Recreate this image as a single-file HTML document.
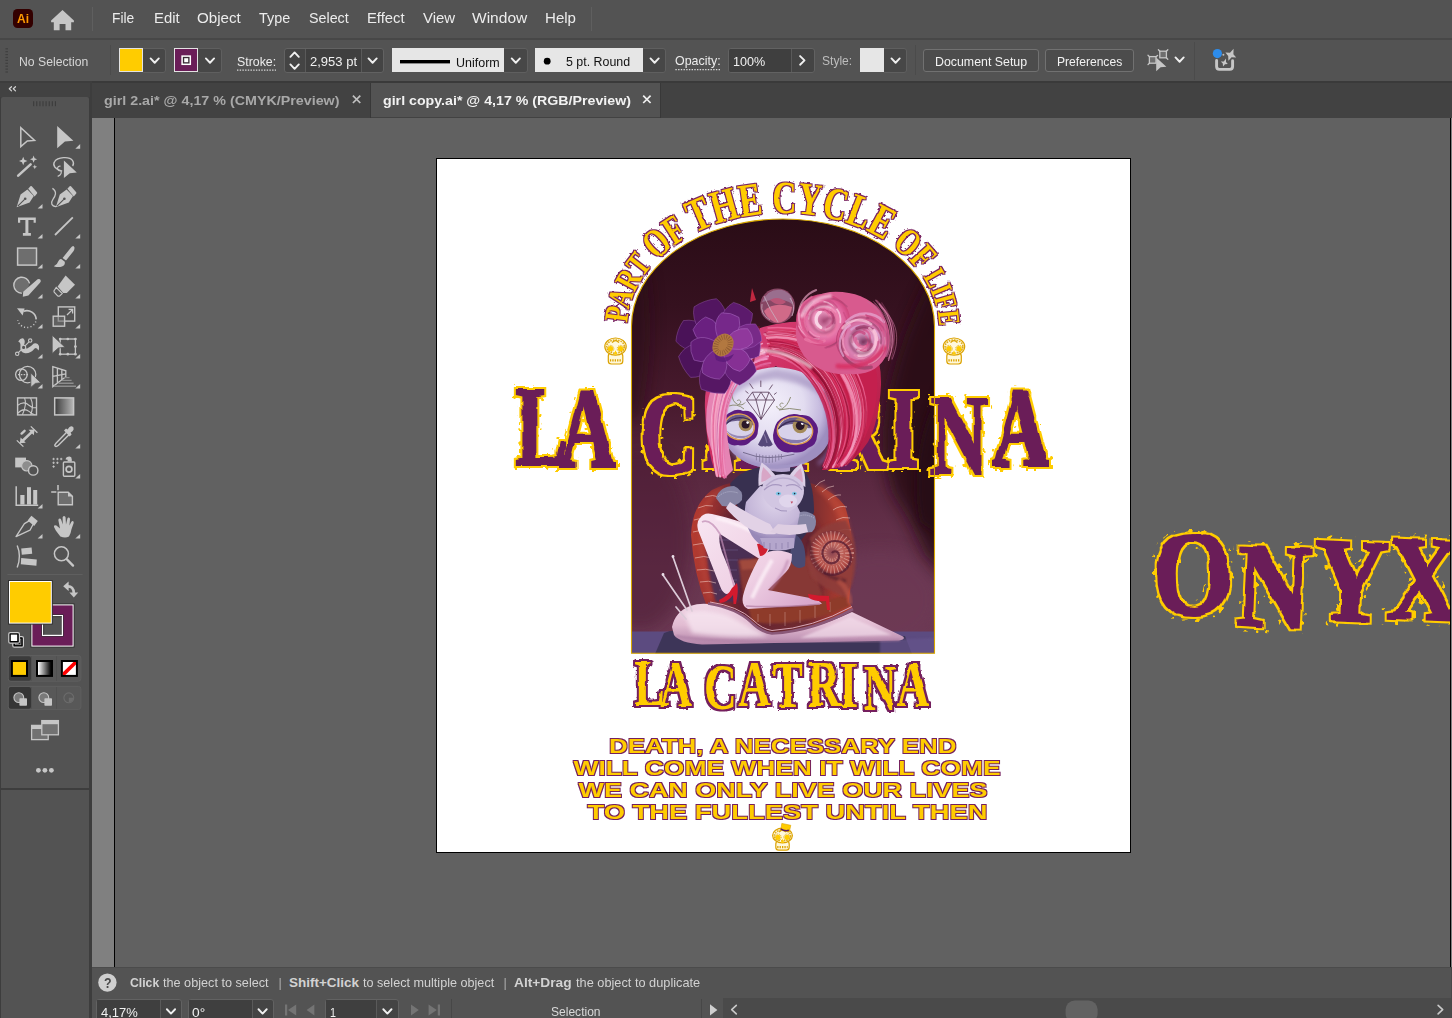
<!DOCTYPE html>
<html lang="en">
<head>
<meta charset="utf-8">
<title>Adobe Illustrator - girl copy.ai</title>
<style>
*{box-sizing:border-box;margin:0;padding:0}
html,body{width:1452px;height:1018px;overflow:hidden;background:#535353}
body{position:relative;font-family:"Liberation Sans",sans-serif;font-size:14px;color:#e4e4e4}
.t{position:absolute;white-space:nowrap;line-height:1;transform-origin:0 0;display:block}
.b{position:absolute;display:block}
svg{position:absolute;display:block;overflow:visible}
#menubar{position:absolute;left:0;top:0;width:1452px;height:38px;background:#535353}
#ctrl{position:absolute;left:0;top:38px;width:1452px;height:43px;background:#535353;border-top:2px solid #474747}
#tabs{position:absolute;left:92px;top:81px;width:1360px;height:37px;background:#424242;border-top:2px solid #3a3a3a}
#tools{position:absolute;left:0;top:81px;width:92px;height:937px;background:#3d3d3d}
#canvas{position:absolute;left:92px;top:118px;width:1360px;height:849px;background:#808080;overflow:hidden}
#pasteboard{position:absolute;left:22px;top:-2px;width:1337px;height:860px;background:#616161;border:1px solid #000}
#artboard{position:absolute;left:436px;top:158px;width:695px;height:695px;background:#fff;border:1px solid #000}
#status{position:absolute;left:92px;top:967px;width:1360px;height:51px;background:#535353;border-top:1px solid #4b4b4b}
#status2{position:absolute;left:723px;top:998px;width:729px;height:20px;background:#4a4a4a}
.fld{position:absolute;background:#444;border:1px solid #626262;border-radius:3px}
.dd{position:absolute;background:#474747;border:1px solid #5f5f5f;border-radius:0 3px 3px 0}
.lt{position:absolute;background:#e6e6e6}
.btn{position:absolute;background:#4c4c4c;border:1px solid #717171;border-radius:3px}
.sep{position:absolute;width:1px;background:#5d5d5d}

</style>
</head>
<body>
<div id="menubar"></div>
<div id="ctrl"></div>
<div class="b" style="left:13.20px;top:9.20px;width:20.00px;height:19.20px;background:#330000;border-radius:4.5px"></div>
<div class="sep" style="left:91.50px;top:6.50px;width:1.00px;height:24.50px;background:#5f5f5f"></div>
<div class="sep" style="left:590.50px;top:6.50px;width:1.00px;height:24.50px;background:#5f5f5f"></div>
<div class="sep" style="left:110.00px;top:45.00px;width:1.00px;height:30.00px;background:#4b4b4b"></div>
<div class="dd" style="left:141.00px;top:47.60px;width:25.00px;height:25.00px;border-radius:3px"></div>
<div class="b" style="left:119.10px;top:48.20px;width:23.70px;height:23.60px;background:#ffcc00;border:1.4px solid #e2e2e2"></div>
<div class="dd" style="left:196.00px;top:47.60px;width:25.50px;height:25.00px;border-radius:3px"></div>
<div class="b" style="left:174.20px;top:48.20px;width:23.80px;height:23.60px;background:#6a1d58;border:1.4px solid #e2e2e2"></div>
<div class="fld" style="left:283.60px;top:47.80px;width:100.60px;height:25.00px;"></div>
<div class="sep" style="left:305.20px;top:48.80px;width:1.00px;height:23.00px;background:#5a5a5a"></div>
<div class="sep" style="left:361.20px;top:48.80px;width:1.00px;height:23.00px;background:#5a5a5a"></div>
<div class="b" style="left:306.20px;top:48.80px;width:55.00px;height:23.00px;background:#3f3f3f"></div>
<div class="dd" style="left:502.00px;top:47.60px;width:26.00px;height:25.00px;border-radius:3px"></div>
<div class="lt" style="left:392.10px;top:48.00px;width:111.70px;height:24.20px;"></div>
<div class="dd" style="left:641.00px;top:47.60px;width:25.00px;height:25.00px;border-radius:3px"></div>
<div class="lt" style="left:535.10px;top:48.00px;width:107.60px;height:24.20px;"></div>
<div class="fld" style="left:728.20px;top:47.80px;width:86.80px;height:25.00px;"></div>
<div class="b" style="left:729.20px;top:48.80px;width:61.80px;height:23.00px;background:#3f3f3f;border-radius:2px 0 0 2px"></div>
<div class="sep" style="left:791.00px;top:48.80px;width:1.00px;height:23.00px;background:#5a5a5a"></div>
<div class="dd" style="left:882.00px;top:47.60px;width:25.40px;height:25.00px;border-radius:3px"></div>
<div class="lt" style="left:859.80px;top:48.00px;width:24.40px;height:24.20px;"></div>
<div class="sep" style="left:915.00px;top:45.00px;width:1.00px;height:30.00px;background:#4b4b4b"></div>
<div class="btn" style="left:923.20px;top:48.80px;width:115.60px;height:22.80px;"></div>
<div class="btn" style="left:1045.20px;top:48.80px;width:88.60px;height:22.80px;"></div>
<div class="sep" style="left:1193.60px;top:42.00px;width:1.00px;height:38.00px;background:#4b4b4b"></div>
<div id="tools"></div>
<div class="b" style="left:0.00px;top:83.00px;width:90.00px;height:14.00px;background:#424242"></div>
<div class="b" style="left:1.00px;top:97.00px;width:88.40px;height:691.00px;background:#535353;border-radius:2px 2px 0 0"></div>
<div class="b" style="left:1.00px;top:789.60px;width:88.40px;height:228.40px;background:#535353"></div>
<div id="tabs"></div>
<div class="b" style="left:371.00px;top:83.00px;width:289.00px;height:34.00px;background:#535353"></div>
<div class="sep" style="left:370.00px;top:83.00px;width:1.00px;height:35.00px;background:#383838"></div>
<div class="sep" style="left:660.00px;top:83.00px;width:1.00px;height:35.00px;background:#383838"></div>
<div id="status"></div>
<div id="status2"></div>
<div class="fld" style="left:96.20px;top:998.60px;width:86.20px;height:25.40px;"></div>
<div class="b" style="left:97.20px;top:999.60px;width:62.80px;height:18.40px;background:#3f3f3f"></div>
<div class="sep" style="left:160.00px;top:999.60px;width:1.00px;height:18.40px;background:#5a5a5a"></div>
<div class="fld" style="left:188.00px;top:998.60px;width:86.20px;height:25.40px;"></div>
<div class="b" style="left:189.00px;top:999.60px;width:62.60px;height:18.40px;background:#3f3f3f"></div>
<div class="sep" style="left:251.60px;top:999.60px;width:1.00px;height:18.40px;background:#5a5a5a"></div>
<div class="fld" style="left:325.00px;top:998.60px;width:73.80px;height:25.40px;"></div>
<div class="b" style="left:326.00px;top:999.60px;width:50.40px;height:18.40px;background:#3f3f3f"></div>
<div class="sep" style="left:376.40px;top:999.60px;width:1.00px;height:18.40px;background:#5a5a5a"></div>
<div class="sep" style="left:451.00px;top:999.00px;width:1.00px;height:19.00px;background:#474747"></div>
<div class="sep" style="left:700.60px;top:999.00px;width:1.00px;height:19.00px;background:#474747"></div>
<div class="b" style="left:1451.00px;top:967.00px;width:1.00px;height:51.00px;background:#484848"></div>
<svg width="1452" height="1018" viewBox="0 0 1452 1018" style="left:0;top:0">
<path d="M62.5 9.9L73.9 20.6V22.2H71.2V30.2H65.5V24H59.6V30.2H53.8V22.2H51.1V20.6Z" fill="#c6c6c6"/>
<rect x="5.4" y="48.2" width="2.6" height="1.2" fill="#404040"/>
<rect x="5.4" y="51.1" width="2.6" height="1.2" fill="#404040"/>
<rect x="5.4" y="54.0" width="2.6" height="1.2" fill="#404040"/>
<rect x="5.4" y="56.9" width="2.6" height="1.2" fill="#404040"/>
<rect x="5.4" y="59.8" width="2.6" height="1.2" fill="#404040"/>
<rect x="5.4" y="62.7" width="2.6" height="1.2" fill="#404040"/>
<rect x="5.4" y="65.6" width="2.6" height="1.2" fill="#404040"/>
<rect x="5.4" y="68.5" width="2.6" height="1.2" fill="#404040"/>
<rect x="5.4" y="71.4" width="2.6" height="1.2" fill="#404040"/>
<path d="M150.60 58.45L154.70 62.75L158.80 58.45" fill="none" stroke="#f0f0f0" stroke-width="1.90" stroke-linecap="round" stroke-linejoin="round"/>
<rect x="182.1" y="56.1" width="8.2" height="8.2" fill="#3a2a36" stroke="#fff" stroke-width="1.5"/>
<rect x="184.2" y="58.2" width="4" height="4" fill="#fff"/>
<path d="M205.90 58.45L210.00 62.75L214.10 58.45" fill="none" stroke="#f0f0f0" stroke-width="1.90" stroke-linecap="round" stroke-linejoin="round"/>
<path d="M237 70.2H276" stroke="#d9d9d9" stroke-width="1.2" stroke-dasharray="1.4 1.3"/>
<path d="M290.40 64.40L294.60 68.80L298.80 64.40" fill="none" stroke="#f0f0f0" stroke-width="1.90" stroke-linecap="round" stroke-linejoin="round"/>
<path d="M290.40 56.80L294.60 52.40L298.80 56.80" fill="none" stroke="#f0f0f0" stroke-width="1.90" stroke-linecap="round" stroke-linejoin="round"/>
<path d="M368.50 58.45L372.60 62.75L376.70 58.45" fill="none" stroke="#f0f0f0" stroke-width="1.90" stroke-linecap="round" stroke-linejoin="round"/>
<rect x="400" y="60" width="50" height="3.4" fill="#000"/>
<path d="M511.70 58.45L515.80 62.75L519.90 58.45" fill="none" stroke="#f0f0f0" stroke-width="1.90" stroke-linecap="round" stroke-linejoin="round"/>
<circle cx="547.2" cy="61.2" r="3.4" fill="#000"/>
<path d="M650.50 58.45L654.60 62.75L658.70 58.45" fill="none" stroke="#f0f0f0" stroke-width="1.90" stroke-linecap="round" stroke-linejoin="round"/>
<path d="M675.4 69.6H721" stroke="#d9d9d9" stroke-width="1.2" stroke-dasharray="1.4 1.3"/>
<path d="M800.10 56.10L804.50 60.40L800.10 64.70" fill="none" stroke="#f0f0f0" stroke-width="1.90" stroke-linecap="round" stroke-linejoin="round"/>
<path d="M891.50 58.45L895.60 62.75L899.70 58.45" fill="none" stroke="#f0f0f0" stroke-width="1.90" stroke-linecap="round" stroke-linejoin="round"/>
<g fill="none" stroke="#c6c6c6" stroke-width="1.3"><rect x="1149.4" y="56.6" width="6.6" height="6.6" fill="#6e6e6e"/><rect x="1159.8" y="51.2" width="6.6" height="6.6" fill="#6e6e6e"/><path d="M1148 55.2l1.4 1.4M1148 64.6l1.4 -1.4M1158.4 49.8l1.4 1.4M1167.8 49.8l-1.4 1.4M1167.8 59.2l-1.4 -1.4M1157.6 55.4l-1.4 1.2" stroke-linecap="round"/></g>
<path d="M1156.2 57.4L1166.4 66.8L1160.6 67.2L1156.2 71.2Z" fill="#c6c6c6"/>
<path d="M1175.50 57.45L1179.60 61.75L1183.70 57.45" fill="none" stroke="#f0f0f0" stroke-width="1.90" stroke-linecap="round" stroke-linejoin="round"/>
<path d="M1216.6 60.4V66.6Q1216.6 69.4 1219.4 69.4H1229.8Q1232.6 69.4 1232.6 66.6V60.8" fill="none" stroke="#c6c6c6" stroke-width="2.9" stroke-linecap="round"/>
<path d="M1233.6 48.8L1233.4 54.2L1236.2 57.6L1231.6 57.2L1228.4 60.8L1228.2 56L1225.4 52.6L1230 52.8Z" fill="#c6c6c6"/>
<path d="M1226 58.6L1226 62L1227.8 64L1225 64.2L1223 66.6L1222.8 63.6L1220.8 61.6L1223.8 61.4Z" fill="#c6c6c6"/>
<circle cx="1223.4" cy="54.8" r="1" fill="#bdbdbd"/>
<circle cx="1217.4" cy="53.6" r="4.6" fill="#2d8ceb"/>
<path d="M11.50 86.70L9.30 88.80L11.50 90.90" fill="none" stroke="#d4d4d4" stroke-width="1.20" stroke-linecap="round" stroke-linejoin="round"/>
<path d="M15.50 86.70L13.30 88.80L15.50 90.90" fill="none" stroke="#d4d4d4" stroke-width="1.20" stroke-linecap="round" stroke-linejoin="round"/>
<rect x="33.20" y="101.2" width="1" height="5" fill="#3a3a3a"/>
<rect x="36.30" y="101.2" width="1" height="5" fill="#3a3a3a"/>
<rect x="39.40" y="101.2" width="1" height="5" fill="#3a3a3a"/>
<rect x="42.50" y="101.2" width="1" height="5" fill="#3a3a3a"/>
<rect x="45.60" y="101.2" width="1" height="5" fill="#3a3a3a"/>
<rect x="48.70" y="101.2" width="1" height="5" fill="#3a3a3a"/>
<rect x="51.80" y="101.2" width="1" height="5" fill="#3a3a3a"/>
<rect x="54.90" y="101.2" width="1" height="5" fill="#3a3a3a"/>
<path d="M352.9 95.6l7.4 7.4M360.3 95.6l-7.4 7.4" stroke="#c0c0c0" stroke-width="1.7" fill="none"/>
<path d="M643.2 95.6l7.4 7.4M650.6 95.6l-7.4 7.4" stroke="#f0f0f0" stroke-width="1.7" fill="none"/>
<circle cx="107.4" cy="982.6" r="9.2" fill="#cfcfcf"/>
<path d="M166.90 1009.25L171.00 1013.55L175.10 1009.25" fill="none" stroke="#f0f0f0" stroke-width="1.90" stroke-linecap="round" stroke-linejoin="round"/>
<path d="M258.50 1009.25L262.60 1013.55L266.70 1009.25" fill="none" stroke="#f0f0f0" stroke-width="1.90" stroke-linecap="round" stroke-linejoin="round"/>
<path d="M285 1004.6h2.2v11h-2.2zM296.2 1004.6v11L288 1010.1z" fill="#747474"/>
<path d="M314.4 1004.6v11L306.6 1010.1z" fill="#747474"/>
<path d="M383.30 1009.25L387.40 1013.55L391.50 1009.25" fill="none" stroke="#f0f0f0" stroke-width="1.90" stroke-linecap="round" stroke-linejoin="round"/>
<path d="M411 1004.6v11L418.8 1010.1z" fill="#747474"/>
<path d="M437.8 1004.6h2.2v11h-2.2zM428.6 1004.6v11L436.8 1010.1z" fill="#747474"/>
<path d="M710 1004.2v11.4L717.4 1009.9z" fill="#cfcfcf"/>
<path d="M736.30 1005.30L731.70 1009.60L736.30 1013.90" fill="none" stroke="#c9c9c9" stroke-width="1.60" stroke-linecap="round" stroke-linejoin="round"/>
<path d="M1438.10 1005.30L1442.70 1009.60L1438.10 1013.90" fill="none" stroke="#c9c9c9" stroke-width="1.60" stroke-linecap="round" stroke-linejoin="round"/>
<rect x="1065.6" y="1000.6" width="32" height="22" rx="9" fill="#626262"/>
</svg>
<span class="t" style="left:17.20px;top:12.23px;font-size:13.20px;color:#ff9a00;font-weight:bold;transform:scaleX(0.9091);">Ai</span>
<span class="t" style="left:112.40px;top:9.76px;font-size:15.40px;color:#ececec;transform:scaleX(0.8946);">File</span>
<span class="t" style="left:153.60px;top:9.76px;font-size:15.40px;color:#ececec;transform:scaleX(0.9647);">Edit</span>
<span class="t" style="left:197.20px;top:9.76px;font-size:15.40px;color:#ececec;transform:scaleX(0.9841);">Object</span>
<span class="t" style="left:259.40px;top:9.76px;font-size:15.40px;color:#ececec;transform:scaleX(0.9345);">Type</span>
<span class="t" style="left:309.30px;top:9.76px;font-size:15.40px;color:#ececec;transform:scaleX(0.9275);">Select</span>
<span class="t" style="left:367.40px;top:9.76px;font-size:15.40px;color:#ececec;transform:scaleX(0.9618);">Effect</span>
<span class="t" style="left:422.80px;top:9.76px;font-size:15.40px;color:#ececec;transform:scaleX(0.9728);">View</span>
<span class="t" style="left:472.30px;top:9.76px;font-size:15.40px;color:#ececec;transform:scaleX(1.0096);">Window</span>
<span class="t" style="left:544.60px;top:9.76px;font-size:15.40px;color:#ececec;transform:scaleX(0.9788);">Help</span>
<span class="t" style="left:19.00px;top:54.86px;font-size:13.40px;color:#d6d6d6;transform:scaleX(0.9121);">No Selection</span>
<span class="t" style="left:236.80px;top:54.89px;font-size:13.60px;color:#ececec;transform:scaleX(0.9098);">Stroke:</span>
<span class="t" style="left:310.30px;top:54.89px;font-size:13.60px;color:#f0f0f0;transform:scaleX(0.9582);">2,953 pt</span>
<span class="t" style="left:455.60px;top:55.89px;font-size:13.60px;color:#111;transform:scaleX(0.9179);">Uniform</span>
<span class="t" style="left:565.70px;top:54.89px;font-size:13.60px;color:#111;transform:scaleX(0.9130);">5 pt. Round</span>
<span class="t" style="left:675.20px;top:54.29px;font-size:13.60px;color:#ececec;transform:scaleX(0.9141);">Opacity:</span>
<span class="t" style="left:733.20px;top:54.89px;font-size:13.60px;color:#f0f0f0;transform:scaleX(0.9257);">100%</span>
<span class="t" style="left:821.60px;top:54.09px;font-size:13.60px;color:#bdbdbd;transform:scaleX(0.8879);">Style:</span>
<span class="t" style="left:935.30px;top:54.89px;font-size:13.60px;color:#f2f2f2;transform:scaleX(0.9092);">Document Setup</span>
<span class="t" style="left:1057.20px;top:54.89px;font-size:13.60px;color:#f2f2f2;transform:scaleX(0.8892);">Preferences</span>
<span class="t" style="left:104.00px;top:94.29px;font-size:13.60px;color:#a8a8a8;font-weight:bold;transform:scaleX(1.0511);">girl 2.ai* @ 4,17 % (CMYK/Preview)</span>
<span class="t" style="left:383.40px;top:94.29px;font-size:13.60px;color:#f2f2f2;font-weight:bold;transform:scaleX(1.0443);">girl copy.ai* @ 4,17 % (RGB/Preview)</span>
<span class="t" style="left:103.60px;top:975.75px;font-size:14.00px;color:#4a4a4a;font-weight:bold;transform:scaleX(0.8887);">?</span>
<span class="t" style="left:130.20px;top:975.77px;font-size:13.50px;color:#d2d2d2;font-weight:bold;transform:scaleX(0.9050);">Click</span>
<span class="t" style="left:163.40px;top:975.77px;font-size:13.50px;color:#d2d2d2;transform:scaleX(0.9381);">the object to select</span>
<span class="t" style="left:278.60px;top:975.77px;font-size:13.50px;color:#d2d2d2;transform:scaleX(0.6273);">|</span>
<span class="t" style="left:288.90px;top:975.77px;font-size:13.50px;color:#d2d2d2;font-weight:bold;">Shift+Click</span>
<span class="t" style="left:363.20px;top:975.77px;font-size:13.50px;color:#d2d2d2;transform:scaleX(0.9350);">to select multiple object</span>
<span class="t" style="left:503.80px;top:975.77px;font-size:13.50px;color:#d2d2d2;transform:scaleX(0.6273);">|</span>
<span class="t" style="left:514.20px;top:975.77px;font-size:13.50px;color:#d2d2d2;font-weight:bold;transform:scaleX(1.0170);">Alt+Drag</span>
<span class="t" style="left:576.00px;top:975.77px;font-size:13.50px;color:#d2d2d2;transform:scaleX(0.9456);">the object to duplicate</span>
<span class="t" style="left:100.60px;top:1006.09px;font-size:13.60px;color:#f0f0f0;transform:scaleX(0.9543);">4,17%</span>
<span class="t" style="left:192.40px;top:1006.09px;font-size:13.60px;color:#f0f0f0;transform:scaleX(1.0152);">0°</span>
<span class="t" style="left:330.40px;top:1006.09px;font-size:13.60px;color:#f0f0f0;transform:scaleX(0.7933);">1</span>
<span class="t" style="left:551.00px;top:1004.69px;font-size:13.60px;color:#d8d8d8;transform:scaleX(0.8865);">Selection</span>
<div id="canvas"><div id="pasteboard"></div></div>
<div id="artboard"></div>
<svg width="1452" height="1018" viewBox="0 0 1452 1018" style="left:0;top:0">
<defs>
<clipPath id="view"><rect x="115" y="118" width="1335" height="849"/></clipPath>
<clipPath id="arch"><path d="M631.5 653.2V326A151.5 107 0 0 1 934.5 326V653.2Z"/></clipPath>
<filter id="b05" x="-20%" y="-20%" width="140%" height="140%"><feGaussianBlur stdDeviation="0.5"/></filter>
<filter id="b1" x="-20%" y="-20%" width="140%" height="140%"><feGaussianBlur stdDeviation="1"/></filter>
<filter id="b2" x="-30%" y="-30%" width="160%" height="160%"><feGaussianBlur stdDeviation="2"/></filter>
<filter id="b4" x="-40%" y="-40%" width="180%" height="180%"><feGaussianBlur stdDeviation="4"/></filter>
<filter id="b8" x="-60%" y="-60%" width="220%" height="220%"><feGaussianBlur stdDeviation="8"/></filter>
<linearGradient id="bgG" x1="0" y1="219" x2="0" y2="653" gradientUnits="userSpaceOnUse">
<stop offset="0" stop-color="#2a0c16"/><stop offset="0.2" stop-color="#35111f"/><stop offset="0.42" stop-color="#481a2e"/>
<stop offset="0.6" stop-color="#5a2840"/><stop offset="0.8" stop-color="#68354f"/><stop offset="1" stop-color="#6c3a54"/></linearGradient>
<radialGradient id="faceG" cx="770" cy="405" r="62" gradientUnits="userSpaceOnUse">
<stop offset="0" stop-color="#f4f0fb"/><stop offset="0.55" stop-color="#e2dcf0"/><stop offset="0.85" stop-color="#c2b6dc"/><stop offset="1" stop-color="#9e8fc0"/></radialGradient>
<linearGradient id="hairG" x1="700" y1="300" x2="880" y2="470" gradientUnits="userSpaceOnUse">
<stop offset="0" stop-color="#d85088"/><stop offset="0.45" stop-color="#cf2f62"/><stop offset="1" stop-color="#b01a42"/></linearGradient>
<radialGradient id="curlG" cx="846" cy="330" r="42" gradientUnits="userSpaceOnUse">
<stop offset="0" stop-color="#b86a98"/><stop offset="0.3" stop-color="#f0a4cc"/><stop offset="0.7" stop-color="#ee6fa2"/><stop offset="1" stop-color="#d8407a"/></radialGradient>
<linearGradient id="legG" x1="700" y1="510" x2="800" y2="610" gradientUnits="userSpaceOnUse">
<stop offset="0" stop-color="#f8e6f2"/><stop offset="0.6" stop-color="#efd0e4"/><stop offset="1" stop-color="#d8a8cc"/></linearGradient>
<linearGradient id="bodyG" x1="0" y1="604" x2="0" y2="646" gradientUnits="userSpaceOnUse">
<stop offset="0" stop-color="#f0d6e6"/><stop offset="0.5" stop-color="#e2bcd2"/><stop offset="1" stop-color="#b080a6"/></linearGradient>
<linearGradient id="shellG" x1="690" y1="0" x2="855" y2="0" gradientUnits="userSpaceOnUse">
<stop offset="0" stop-color="#b83c30"/><stop offset="0.12" stop-color="#9c3230"/><stop offset="0.3" stop-color="#662432"/><stop offset="0.7" stop-color="#702a30"/><stop offset="0.9" stop-color="#a63a30"/><stop offset="1" stop-color="#bc4432"/></linearGradient>
<radialGradient id="spirG" cx="832" cy="553" r="23" gradientUnits="userSpaceOnUse">
<stop offset="0" stop-color="#8a4450"/><stop offset="0.4" stop-color="#c06860"/><stop offset="0.75" stop-color="#b04a44"/><stop offset="1" stop-color="#7a3038"/></radialGradient>
<radialGradient id="curlG1" cx="824" cy="321" r="28" gradientUnits="userSpaceOnUse">
<stop offset="0" stop-color="#a84a78"/><stop offset="0.35" stop-color="#ec98c0"/><stop offset="0.75" stop-color="#e0609a"/><stop offset="1" stop-color="#c83c70"/></radialGradient>
<radialGradient id="curlG2" cx="863" cy="342" r="27" gradientUnits="userSpaceOnUse">
<stop offset="0" stop-color="#7e3a64"/><stop offset="0.35" stop-color="#dc98c4"/><stop offset="0.75" stop-color="#d870a4"/><stop offset="1" stop-color="#b83c70"/></radialGradient>
<radialGradient id="catG" cx="775" cy="500" r="40" gradientUnits="userSpaceOnUse">
<stop offset="0" stop-color="#e0d6ec"/><stop offset="0.7" stop-color="#c4b6d8"/><stop offset="1" stop-color="#9888b8"/></radialGradient>
<filter id="fBig" filterUnits="userSpaceOnUse" x="500" y="372" width="570" height="116" color-interpolation-filters="sRGB"><feTurbulence type="fractalNoise" baseFrequency="0.060" numOctaves="2" seed="5" result="w"/><feDisplacementMap in="SourceAlpha" in2="w" scale="5.0" xChannelSelector="R" yChannelSelector="G" result="src"/><feMorphology in="src" operator="dilate" radius="1.00" result="fat"/><feMorphology in="src" operator="dilate" radius="3.00" result="out"/><feMorphology in="src" operator="dilate" radius="5.00" result="band"/><feTurbulence type="fractalNoise" baseFrequency="0.22" numOctaves="1" seed="4" result="n"/><feColorMatrix in="n" type="matrix" values="0 0 0 0 0  0 0 0 0 0  0 0 0 0 0  30.0 0 0 0 -18.90" result="dots"/><feComposite in="dots" in2="band" operator="in" result="th"/><feGaussianBlur in="out" stdDeviation="0.3" result="outs"/><feMerge result="edgeA"><feMergeNode in="th"/><feMergeNode in="outs"/></feMerge><feFlood flood-color="#ffcc00"/><feComposite in2="edgeA" operator="in" result="e"/><feGaussianBlur in="fat" stdDeviation="0.4" result="fats"/><feFlood flood-color="#6a1d58"/><feComposite in2="fats" operator="in" result="p"/><feMerge><feMergeNode in="e"/><feMergeNode in="p"/></feMerge></filter>
<filter id="fSmall" filterUnits="userSpaceOnUse" x="626" y="652" width="314" height="66" color-interpolation-filters="sRGB"><feTurbulence type="fractalNoise" baseFrequency="0.100" numOctaves="2" seed="10" result="w"/><feDisplacementMap in="SourceAlpha" in2="w" scale="3.0" xChannelSelector="R" yChannelSelector="G" result="src"/><feMorphology in="src" operator="dilate" radius="0.00" result="fat"/><feMorphology in="src" operator="dilate" radius="2.00" result="out"/><feMorphology in="src" operator="dilate" radius="3.00" result="band"/><feTurbulence type="fractalNoise" baseFrequency="0.36" numOctaves="1" seed="9" result="n"/><feColorMatrix in="n" type="matrix" values="0 0 0 0 0  0 0 0 0 0  0 0 0 0 0  30.0 0 0 0 -18.60" result="dots"/><feComposite in="dots" in2="band" operator="in" result="th"/><feGaussianBlur in="out" stdDeviation="0.3" result="outs"/><feMerge result="edgeA"><feMergeNode in="th"/><feMergeNode in="outs"/></feMerge><feFlood flood-color="#741f5e"/><feComposite in2="edgeA" operator="in" result="e"/><feGaussianBlur in="fat" stdDeviation="0.4" result="fats"/><feFlood flood-color="#ffcc00"/><feComposite in2="fats" operator="in" result="p"/><feMerge><feMergeNode in="e"/><feMergeNode in="p"/></feMerge></filter>
<filter id="fOnyx" filterUnits="userSpaceOnUse" x="1140" y="515" width="320" height="130" color-interpolation-filters="sRGB"><feTurbulence type="fractalNoise" baseFrequency="0.050" numOctaves="2" seed="13" result="w"/><feDisplacementMap in="SourceAlpha" in2="w" scale="6.0" xChannelSelector="R" yChannelSelector="G" result="src"/><feMorphology in="src" operator="dilate" radius="1.00" result="fat"/><feMorphology in="src" operator="dilate" radius="3.00" result="out"/><feMorphology in="src" operator="dilate" radius="6.00" result="band"/><feTurbulence type="fractalNoise" baseFrequency="0.17" numOctaves="1" seed="12" result="n"/><feColorMatrix in="n" type="matrix" values="0 0 0 0 0  0 0 0 0 0  0 0 0 0 0  30.0 0 0 0 -18.90" result="dots"/><feComposite in="dots" in2="band" operator="in" result="th"/><feGaussianBlur in="out" stdDeviation="0.3" result="outs"/><feMerge result="edgeA"><feMergeNode in="th"/><feMergeNode in="outs"/></feMerge><feFlood flood-color="#ffcc00"/><feComposite in2="edgeA" operator="in" result="e"/><feGaussianBlur in="fat" stdDeviation="0.4" result="fats"/><feFlood flood-color="#6a1d58"/><feComposite in2="fats" operator="in" result="p"/><feMerge><feMergeNode in="e"/><feMergeNode in="p"/></feMerge></filter>
<filter id="fArc" filterUnits="userSpaceOnUse" x="596" y="168" width="376" height="170" color-interpolation-filters="sRGB"><feTurbulence type="fractalNoise" baseFrequency="0.120" numOctaves="2" seed="22" result="w"/><feDisplacementMap in="SourceAlpha" in2="w" scale="2.0" xChannelSelector="R" yChannelSelector="G" result="src"/><feMorphology in="src" operator="dilate" radius="0.00" result="fat"/><feMorphology in="src" operator="dilate" radius="1.00" result="out"/><feMorphology in="src" operator="dilate" radius="2.00" result="band"/><feTurbulence type="fractalNoise" baseFrequency="0.45" numOctaves="1" seed="21" result="n"/><feColorMatrix in="n" type="matrix" values="0 0 0 0 0  0 0 0 0 0  0 0 0 0 0  30.0 0 0 0 -18.60" result="dots"/><feComposite in="dots" in2="band" operator="in" result="th"/><feGaussianBlur in="out" stdDeviation="0.3" result="outs"/><feMerge result="edgeA"><feMergeNode in="th"/><feMergeNode in="outs"/></feMerge><feFlood flood-color="#7a2562"/><feComposite in2="edgeA" operator="in" result="e"/><feGaussianBlur in="fat" stdDeviation="0.4" result="fats"/><feFlood flood-color="#ffcc00"/><feComposite in2="fats" operator="in" result="p"/><feMerge><feMergeNode in="e"/><feMergeNode in="p"/></feMerge></filter>
<filter id="fQuote" filterUnits="userSpaceOnUse" x="560" y="730" width="452" height="98" color-interpolation-filters="sRGB"><feTurbulence type="fractalNoise" baseFrequency="0.100" numOctaves="2" seed="3" result="w"/><feDisplacementMap in="SourceAlpha" in2="w" scale="0.0" xChannelSelector="R" yChannelSelector="G" result="src"/><feMorphology in="src" operator="dilate" radius="0.00" result="fat"/><feMorphology in="src" operator="dilate" radius="1.00" result="out"/><feMorphology in="src" operator="dilate" radius="1.00" result="band"/><feTurbulence type="fractalNoise" baseFrequency="0.70" numOctaves="1" seed="2" result="n"/><feColorMatrix in="n" type="matrix" values="0 0 0 0 0  0 0 0 0 0  0 0 0 0 0  30.0 0 0 0 -27.00" result="dots"/><feComposite in="dots" in2="band" operator="in" result="th"/><feGaussianBlur in="out" stdDeviation="0.3" result="outs"/><feMerge result="edgeA"><feMergeNode in="th"/><feMergeNode in="outs"/></feMerge><feFlood flood-color="#741f5e"/><feComposite in2="edgeA" operator="in" result="e"/><feGaussianBlur in="fat" stdDeviation="0.4" result="fats"/><feFlood flood-color="#ffcc00"/><feComposite in2="fats" operator="in" result="p"/><feMerge><feMergeNode in="e"/><feMergeNode in="p"/></feMerge></filter>
<path id="arcp" d="M627 328A156 115 0 0 1 939 328" fill="none"/>
</defs>
<g clip-path="url(#view)">
<g clip-path="url(#arch)">
<rect x="631" y="218" width="304" height="436" fill="url(#bgG)"/>
<ellipse cx="640" cy="540" rx="50" ry="90" fill="#4e1f36" opacity="0.55" filter="url(#b8)"/>
<ellipse cx="880" cy="600" rx="60" ry="50" fill="#6e3a56" opacity="0.6" filter="url(#b8)"/>
<path d="M940 260L960 260L960 590L926 556L908 518L892 492L882 450Q884 360 940 260Z" fill="#2b0d18" opacity="0.9" filter="url(#b8)"/>
<path d="M944 380L960 380L960 550L920 522Q906 450 944 380Z" fill="#260a14" opacity="0.8" filter="url(#b4)"/>
<path d="M620 240L640 240Q660 330 640 420L620 420Z" fill="#2b0d18" opacity="0.6" filter="url(#b8)"/>
<rect x="631" y="631.5" width="304" height="22" fill="#5c4b80"/>
<path d="M631 631.5H935" stroke="#4a3760" stroke-width="1.5" filter="url(#b05)"/>
<path d="M664 633L670 631L905 636L912 654L655 654Z" fill="#3d3558" filter="url(#b05)"/>
<path d="M880 640L935 638V654H880Z" fill="#66558c" opacity="0.7" filter="url(#b1)"/>
</g>
<g filter="url(#fBig)"><text transform="scale(0.7800 1.1500)" x="660.9 717.1 769.3 821.6 902.4 982.0 1063.5 1138.9 1193.4 1272.2" y="404.1 406.0 406.0 410.4 406.9 408.4 407.1 406.2 412.3 405.6" font-family="'Liberation Serif',serif" font-weight="bold" font-size="100" fill="#6a1d58">LA CATRINA</text></g>
<g clip-path="url(#arch)">
<path d="M706 604Q694 575 691 535Q692 505 712 490Q740 476 780 478Q825 480 845 506Q856 540 851 580L849 602L853 609Q815 630 772 634Q760 632 750 622Q735 608 706 604Z" fill="url(#shellG)"/>
<path d="M711 600Q699 560 701 520Q705 500 722 489" fill="none" stroke="#cc5240" stroke-width="5" opacity="0.4" filter="url(#b2)"/>
<path d="M818 486Q846 505 848 545" fill="none" stroke="#d05440" stroke-width="8" opacity="0.45" filter="url(#b2)"/>
<path d="M716 520Q740 500 790 500Q820 520 826 560L820 600L740 600Z" fill="#5e2230" opacity="0.75" filter="url(#b4)"/>
<path d="M724 522Q744 536 756 556L742 566L738 602L716 602Q704 560 708 534Z" fill="#46305a" opacity="0.85" filter="url(#b1)"/><path d="M714 540h22M714 550h24M716 560h22M717 570h20M718 580h19M719 590h18" stroke="#7a6aa0" stroke-width="0.7" opacity="0.6" fill="none"/><path d="M738 560L812 556L822 596L745 606Z" fill="#873834" filter="url(#b1)"/>
<path d="M740 560L790 557L786 566L742 570Z" fill="#a85040" opacity="0.8" filter="url(#b1)"/>
<path d="M752 622Q800 628 850 606L846 594Q800 612 748 606Z" fill="#8e3a2c" filter="url(#b1)"/>
<g stroke="#f2cfc8" stroke-width="0.8" fill="none" opacity="0.7">
<path d="M694 520q8 -3 14 -1M693 532q9 -3 16 -1M693 545q9 -3 17 0M695 558q9 -3 17 0M697 570q9 -2 17 1M700 582q9 -2 16 1M703 593q8 -2 14 1M698 508q8 -4 15 -2M705 497q8 -3 14 0"/>
<path d="M822 492q6 -6 12 -6M828 500q7 -6 13 -5M833 510q7 -5 14 -3M836 520q7 -4 14 -2M838 531q7 -3 13 -1M815 487q5 -6 10 -7"/>
<path d="M770 614v12M785 612v14M800 610v13M815 606v12M830 602v10M758 614v8" opacity="0.6"/>
</g>
<path d="M846 520Q862 548 852 584L846 598Q826 590 812 578Q804 560 810 538Q824 522 846 520Z" fill="#8e3c3a" opacity="0.9" filter="url(#b1)"/><circle cx="832" cy="553" r="22.5" fill="url(#spirG)"/>
<circle cx="832" cy="553" r="17.5" fill="none" stroke="#f0c4bc" stroke-width="9" stroke-dasharray="0.9 2.6" opacity="0.55"/>
<circle cx="832" cy="553" r="8.5" fill="none" stroke="#f0c4bc" stroke-width="6" stroke-dasharray="0.8 2.2" opacity="0.5"/>
<path d="M832 553c2 -3 7 -2 7 3c0 7 -9 10 -14 4c-6 -8 0 -19 10 -19c13 0 19 13 14 24c-5 9 -16 12 -25 8" fill="none" stroke="#5e2234" stroke-width="2.2" opacity="0.85" filter="url(#b05)"/>
<path d="M809 540Q811 576 846 581" fill="none" stroke="#4e1c2c" stroke-width="3.5" opacity="0.6" filter="url(#b1)"/>
<path d="M838 580Q850 590 850 604" fill="none" stroke="#c45a48" stroke-width="5" opacity="0.5" filter="url(#b1)"/>
<path d="M672 627Q675 612 690 606Q702 602 714 605Q736 609 750 622Q760 632 772 634Q812 631 852 612L903 636.5Q906 639.5 899 640.5L702 644.5Q680 643 674 635Z" fill="url(#bodyG)"/>
<path d="M684 613Q700 607 728 615Q750 627 768 636Q730 639 692 633Z" fill="#f8e8f2" opacity="0.75" filter="url(#b2)"/>
<path d="M850 617L892 635L800 638Z" fill="#f2dcea" opacity="0.7" filter="url(#b1)"/>
<path d="M676 636Q720 645 900 640" fill="none" stroke="#a87aa0" stroke-width="2" opacity="0.7" filter="url(#b1)"/>
<path d="M708 603.5Q736 608 751 622Q761 632 772 633.5Q814 631 853 609" fill="none" stroke="#8a5878" stroke-width="2.6"/>
<path d="M710 602Q738 606 753 620Q762 629 772 630.5Q813 628 852 606.5" fill="none" stroke="#d8a8b8" stroke-width="1"/>
<path d="M673 557L692 611M663 575L687 610M676 607L686 619" fill="none" stroke="#dccbd8" stroke-width="1.7" stroke-linecap="round"/>
<circle cx="673" cy="556.5" r="1.4" fill="#e8dce6"/><circle cx="663" cy="574.5" r="1.4" fill="#e8dce6"/>
<path d="M730 484Q742 468 768 466L802 468Q814 480 814 512L806 534L786 560L770 556L742 520Z" fill="#383050"/>
<path d="M792 532Q808 540 805 566Q796 572 790 560Z" fill="#4a4a72"/>
<path d="M768 462h22v10h-22z" fill="#b0a0cc"/>
<path d="M764 468Q780 476 802 468L800 476Q780 482 766 476Z" fill="#2e2640"/>
<path d="M700 518Q704 512 712 514Q740 520 760 530L770 548Q764 560 758 558L720 534Q718 540 722 552L735 584Q734 594 726 594Q722 592 720 586L698 530Q696 522 700 518Z" fill="url(#legG)"/>
<path d="M760 556Q775 546 792 554Q792 566 786 572L768 590L810 598Q820 600 822 604L748 609Q741 606 743 596Q746 582 760 556Z" fill="url(#legG)"/>
<path d="M702 522Q710 518 720 534L734 586" fill="none" stroke="#c08cb4" stroke-width="1.8" opacity="0.7" filter="url(#b05)"/>
<path d="M716 518Q740 524 760 536" fill="none" stroke="#fff6fb" stroke-width="3" opacity="0.8" filter="url(#b1)"/>
<path d="M772 560Q760 580 752 598" fill="none" stroke="#fff6fb" stroke-width="4" opacity="0.7" filter="url(#b1)"/>
<path d="M788 560Q784 574 770 590" fill="none" stroke="#b880aa" stroke-width="2.4" opacity="0.7" filter="url(#b1)"/>
<path d="M746 606Q780 608 820 604" fill="none" stroke="#b884aa" stroke-width="1.6" opacity="0.8" filter="url(#b05)"/>
<path d="M757 544Q764 542 768 548Q766 556 760 556Z" fill="#d02030"/>
<path d="M719 600Q728 596 732 588L737 583Q739 590 736 604L733.5 604L733 595Q728 602 720 603Z" fill="#d31a2e"/>
<path d="M808 594Q818 596 829 596L830 610L827 610L826 601Q816 602 809 598Z" fill="#d31a2e"/>
<path d="M705 410Q703 372 727 346Q750 326 790 322L850 320Q882 340 881 385Q879 422 868 442Q856 460 844 466L822 470Q834 450 832 420L776 366L722 400L714 440L724 478L716 476Q706 446 705 410Z" fill="url(#hairG)"/>
<path d="M721 420Q720 371 776 367Q833 371 833 420Q833 448 812 460Q796 468.5 777 468.5Q756 468.5 742 460Q721 448 721 420Z" fill="url(#faceG)"/>
<path d="M723 408Q730 377 776 369Q822 375 831 408Q818 385 776 379Q736 383 723 408Z" fill="#9a86b8" opacity="0.55" filter="url(#b2)"/>
<path d="M824 396Q834 420 831 446Q828 458 818 464" fill="none" stroke="#8a6aa8" stroke-width="5" opacity="0.6" filter="url(#b2)"/>
<path d="M724 412Q722 440 740 458" fill="none" stroke="#a890c4" stroke-width="4" opacity="0.6" filter="url(#b2)"/>
<path d="M742 460Q756 468.5 777 468.5Q796 468.5 812 460Q796 465 777 465Q758 465 742 460Z" fill="#a396c6" opacity="0.8"/>
<g>
<path d="M723 422q2 -8 8 -10q6 -4 12 -1q8 -1 12 5q5 6 3 14q0 8 -7 11q-5 6 -13 4q-8 2 -12 -5q-6 -7 -3 -18z" fill="#5c1c80"/>
<ellipse cx="739.4" cy="426.8" rx="14.6" ry="12.4" transform="rotate(8 739.4 426.8)" fill="#d8d2ea"/>
<path d="M725 424q4 -10 16 -10q10 1 14 10q-2 2 -4 1q-12 -8 -26 -1z" fill="#6a5c8c"/>
<path d="M726 430q6 10 18 8q8 -2 10 -8q-4 6 -12 6q-10 0 -16 -6z" fill="#9688b8"/>
<circle cx="745.6" cy="424.4" r="6.9" fill="#a48a5a"/><circle cx="745.6" cy="424.4" r="4" fill="#2a1828"/><circle cx="747.6" cy="422.6" r="1.3" fill="#fff"/>
<path d="M725 425q12 -13 29 -3" fill="none" stroke="#3e2e58" stroke-width="1.4"/>
<ellipse cx="739.4" cy="426.8" rx="15" ry="12.8" transform="rotate(8 739.4 426.8)" fill="none" stroke="#e0a050" stroke-width="1.4"/>
<path d="M774 430q2 -10 10 -13q8 -5 16 -2q10 -1 14 6q6 6 3 15q0 9 -9 12q-6 6 -16 4q-10 2 -15 -5q-6 -7 -3 -17z" fill="#5c1c80"/>
<ellipse cx="795" cy="430.6" rx="17.4" ry="13.6" transform="rotate(6 795 430.6)" fill="#d8d2ea"/>
<path d="M778 428q6 -12 20 -11q10 1 14 10q-2 2 -4 1q-14 -8 -30 0z" fill="#6a5c8c"/>
<path d="M779 436q8 9 20 7q9 -2 12 -9q-5 6 -14 6q-11 0 -18 -4z" fill="#8678ac"/>
<circle cx="800.2" cy="425.6" r="7.6" fill="#a48a5a"/><circle cx="800.2" cy="425.6" r="4.4" fill="#2a1828"/><circle cx="802.4" cy="423.6" r="1.4" fill="#fff"/>
<path d="M778 429q14 -15 34 -2" fill="none" stroke="#3e2e58" stroke-width="1.5"/>
<ellipse cx="795" cy="430.6" rx="17.7" ry="13.9" transform="rotate(6 795 430.6)" fill="none" stroke="#e0a050" stroke-width="1.4"/>
</g>
<path d="M765.4 429.4Q769 438 772.8 444.6Q770 447.6 767 446Q765.4 447.4 763.6 446Q760.6 447.6 758 444.6Q762 438 765.4 429.4Z" fill="#56487a"/>
<path d="M764 434q2 4 3 9" fill="none" stroke="#8c7eaa" stroke-width="1.2" opacity="0.8"/>
<path d="M743 452.4Q756 457.6 768 457.6Q782 457.4 794.4 454.2" fill="none" stroke="#6e6488" stroke-width="0.9"/>
<path d="M756.4 453.4v7M759.6 454.4v7.4M762.8 455v7.6M766 455.4v7.6M769.2 455.4v7.6M772.4 455.2v7.4M775.6 454.8v7M778.8 454.4v6M781.4 454v5" fill="none" stroke="#7a7094" stroke-width="0.7"/>
<g fill="none" stroke="#5e4460" stroke-width="0.85">
<path d="M746.6 400L752.4 392.2H769L774.6 400L761 419.4ZM746.6 400H774.6M752.4 392.2L756 400L761 392.2L766 400L769 392.2M756 400L761 419.4L766 400"/>
<path d="M760.8 380.6v6.4M749.6 383.4l3.6 5.4M772.6 384.6l-3.4 5M745.4 391l3 2.4M776.6 392.6l-2.6 2"/>
<path d="M731.6 393q0.6 9 6 11.4q5 1.6 7.6 -2M729 406q8 -3 15 3M790.6 397q-3 9 -9 12q-4 1 -5 -3M779 410q10 -3 22 0" stroke="#84846a" stroke-width="0.9"/>
<path d="M737 401a2 2 0 1 1 2 3M783.6 404a2 2 0 1 0 -2 3" stroke="#84846a" stroke-width="0.8"/>
</g>
<path d="M712 386Q722 370 742 364Q729 384 726 410Q726 440 733 470L724 479Q713 462 707 432Q704 408 712 386Z" fill="#e684b4"/>
<path d="M770 352Q800 352 822 380Q836 402 838 425Q838 450 822 470Q836 469 846 463Q862 448 870 425Q879 400 877 375Q872 348 850 336Q810 326 770 338Z" fill="#c4204e"/>
<path d="M824 392Q836 418 834 446Q830 460 822 468" fill="none" stroke="#5a0e2a" stroke-width="3" opacity="0.7" filter="url(#b1)"/>
<g fill="none" stroke-linecap="round" filter="url(#b05)">
<path d="M769.6 345.3C834.4 342.1 866.2 418.4 834.6 465.8" stroke="#b01640" stroke-width="1.1" opacity="0.65"/>
<path d="M771.3 352.5C819.8 356.2 850.3 419.8 829.2 467.2" stroke="#a81038" stroke-width="0.8" opacity="0.69"/>
<path d="M770.1 351.3C812.6 359.2 846.6 421.7 826.3 467.5" stroke="#c41e50" stroke-width="0.8" opacity="0.49"/>
<path d="M767.6 338.5C846.9 331.1 874.2 421.3 838.8 462.0" stroke="#a81038" stroke-width="2.2" opacity="0.63"/>
<path d="M766.4 336.0C856.1 322.3 883.2 422.1 842.6 466.0" stroke="#d42c60" stroke-width="1.6" opacity="0.70"/>
<path d="M771.7 348.4C821.0 350.8 853.1 422.1 827.3 467.2" stroke="#f7a6c6" stroke-width="0.9" opacity="0.81"/>
<path d="M771.2 349.5C819.3 355.3 850.7 420.7 826.8 465.9" stroke="#d02454" stroke-width="0.8" opacity="0.84"/>
<path d="M766.6 333.1C858.3 317.5 893.3 420.5 845.9 460.8" stroke="#e0406f" stroke-width="1.2" opacity="0.57"/>
<path d="M766.5 334.4C848.5 326.0 881.5 418.7 841.7 463.3" stroke="#c41e50" stroke-width="1.0" opacity="0.71"/>
<path d="M765.2 333.5C854.3 324.4 882.6 420.6 843.6 462.0" stroke="#8a0c2e" stroke-width="2.5" opacity="0.54"/>
<path d="M768.2 331.7C859.1 318.2 887.3 422.3 843.6 464.2" stroke="#b81844" stroke-width="1.6" opacity="0.86"/>
<path d="M769.2 344.4C838.9 338.5 867.5 420.8 835.9 462.9" stroke="#d02454" stroke-width="2.5" opacity="0.54"/>
<path d="M770.7 353.3C810.6 359.7 844.1 420.4 823.5 466.2" stroke="#c41e50" stroke-width="2.6" opacity="0.75"/>
<path d="M768.3 335.6C844.2 329.2 879.2 421.0 841.8 461.8" stroke="#8a0c2e" stroke-width="0.9" opacity="0.48"/>
<path d="M768.3 344.4C827.3 347.7 856.7 422.2 832.7 463.9" stroke="#980e34" stroke-width="1.4" opacity="0.76"/>
<path d="M768.5 332.0C858.5 324.2 887.6 420.6 843.3 463.8" stroke="#a81038" stroke-width="0.9" opacity="0.49"/>
<path d="M770.1 350.8C816.9 359.1 850.5 419.8 827.2 466.7" stroke="#e87aa6" stroke-width="2.2" opacity="0.46"/>
<path d="M768.3 338.2C843.1 335.5 873.4 422.1 836.4 462.2" stroke="#b81844" stroke-width="1.1" opacity="0.73"/>
<path d="M770.2 340.8C840.1 339.2 867.6 419.5 834.6 465.6" stroke="#b01640" stroke-width="2.3" opacity="0.86"/>
<path d="M766.1 333.3C855.1 321.4 886.2 421.7 845.2 464.5" stroke="#b81844" stroke-width="2.3" opacity="0.50"/>
<path d="M771.3 344.3C835.0 341.4 867.5 421.1 836.6 465.7" stroke="#980e34" stroke-width="0.9" opacity="0.46"/>
<path d="M764.5 334.1C856.0 322.6 887.4 417.6 841.5 463.3" stroke="#f7a6c6" stroke-width="2.2" opacity="0.57"/>
<path d="M768.8 337.7C849.0 325.8 881.6 420.7 840.7 461.8" stroke="#d02454" stroke-width="1.2" opacity="0.66"/>
<path d="M768.5 349.6C822.0 352.5 851.4 419.2 829.7 466.4" stroke="#a81038" stroke-width="2.6" opacity="0.52"/>
<path d="M767.9 332.2C854.0 326.6 884.2 419.8 841.3 465.5" stroke="#f7a6c6" stroke-width="1.5" opacity="0.71"/>
<path d="M768.2 335.1C855.8 324.1 884.7 421.1 845.1 464.2" stroke="#c8204c" stroke-width="1.0" opacity="0.56"/>
<path d="M767.6 343.7C833.9 347.0 861.5 421.1 830.8 465.5" stroke="#f7a6c6" stroke-width="1.6" opacity="0.70"/>
<path d="M767.3 333.2C852.0 326.0 882.4 418.4 840.3 465.4" stroke="#e0406f" stroke-width="1.6" opacity="0.90"/>
<path d="M766.7 333.3C856.7 324.3 887.6 420.9 845.2 463.1" stroke="#e87aa6" stroke-width="1.3" opacity="0.78"/>
<path d="M768.3 340.4C844.2 332.9 874.1 421.7 840.4 463.0" stroke="#dc3866" stroke-width="1.1" opacity="0.70"/>
<path d="M770.4 347.0C823.7 347.5 856.5 420.2 828.5 468.0" stroke="#e87aa6" stroke-width="2.2" opacity="0.70"/>
<path d="M770.0 340.0C836.7 340.0 869.9 422.1 834.2 464.9" stroke="#e0406f" stroke-width="1.4" opacity="0.86"/>
<path d="M768.5 331.7C856.8 320.4 886.6 418.8 845.7 465.6" stroke="#f7a6c6" stroke-width="1.1" opacity="0.55"/>
<path d="M767.0 336.8C847.0 329.8 878.1 418.1 839.5 463.0" stroke="#d02454" stroke-width="2.1" opacity="0.85"/>
<path d="M772.5 355.1C813.7 361.2 846.9 420.2 824.1 465.5" stroke="#e87aa6" stroke-width="1.9" opacity="0.84"/>
<path d="M771.8 350.0C825.6 350.8 854.2 422.1 828.5 468.6" stroke="#ee6a9a" stroke-width="1.0" opacity="0.56"/>
<path d="M766.4 334.5C850.0 329.6 880.3 418.1 839.8 465.0" stroke="#f7a6c6" stroke-width="1.0" opacity="0.71"/>
<path d="M771.5 344.7C830.9 346.9 860.4 422.5 834.2 467.1" stroke="#c41e50" stroke-width="1.0" opacity="0.47"/>
<path d="M768.8 341.1C837.8 336.1 869.0 421.7 839.0 466.9" stroke="#ee6a9a" stroke-width="1.8" opacity="0.51"/>
<path d="M765.8 335.6C845.5 331.7 876.0 418.6 838.7 464.9" stroke="#f7a6c6" stroke-width="2.3" opacity="0.53"/>
<path d="M770.5 342.6C833.2 340.4 865.9 417.6 836.5 466.7" stroke="#c8204c" stroke-width="2.4" opacity="0.86"/>
<path d="M766.7 329.9C859.4 319.9 890.4 418.9 842.8 464.5" stroke="#e0406f" stroke-width="2.3" opacity="0.63"/>
<path d="M768.5 333.5C858.2 323.9 886.6 421.1 841.7 462.6" stroke="#c41e50" stroke-width="1.0" opacity="0.85"/>
<path d="M768.1 328.0C860.4 320.7 890.5 418.6 845.3 461.4" stroke="#ee6a9a" stroke-width="1.5" opacity="0.90"/>
<path d="M769.2 339.9C846.5 331.4 875.4 421.2 837.3 463.9" stroke="#f7a6c6" stroke-width="2.2" opacity="0.74"/>
<path d="M770.7 352.6C811.7 361.7 844.1 420.1 827.0 465.0" stroke="#c41e50" stroke-width="2.3" opacity="0.48"/>
<path d="M769.7 337.4C844.0 334.0 872.5 418.3 837.5 465.2" stroke="#f7a6c6" stroke-width="1.6" opacity="0.67"/>
<path d="M769.8 346.2C826.4 349.4 856.5 422.1 831.8 467.1" stroke="#f7a6c6" stroke-width="0.8" opacity="0.56"/>
<path d="M770.0 354.2C813.6 362.1 847.3 417.8 828.3 469.1" stroke="#ee6a9a" stroke-width="2.2" opacity="0.55"/>
<path d="M766.4 338.0C845.7 328.4 880.1 422.0 838.3 466.4" stroke="#d02454" stroke-width="1.9" opacity="0.50"/>
<path d="M768.0 337.5C841.0 334.7 872.1 419.7 838.9 464.3" stroke="#b81844" stroke-width="2.0" opacity="0.76"/>
<path d="M771.0 346.8C828.4 344.9 859.6 419.9 832.7 464.6" stroke="#e87aa6" stroke-width="1.9" opacity="0.61"/>
<path d="M771.3 347.8C826.0 350.7 858.3 418.4 829.4 468.3" stroke="#d02454" stroke-width="2.4" opacity="0.47"/>
<path d="M770.5 352.2C815.7 357.3 847.1 417.9 824.2 467.6" stroke="#e87aa6" stroke-width="1.2" opacity="0.89"/>
<path d="M768.4 341.6C836.2 338.9 869.1 421.5 834.9 466.7" stroke="#dc3866" stroke-width="2.2" opacity="0.55"/>
<path d="M768.2 345.4C832.6 344.1 866.8 419.1 834.2 466.5" stroke="#e0406f" stroke-width="1.6" opacity="0.62"/>
<path d="M773.3 349.6C814.8 358.1 848.6 420.9 826.0 468.0" stroke="#ee6a9a" stroke-width="1.4" opacity="0.86"/>
<path d="M769.4 339.5C843.5 334.6 874.9 418.6 838.5 463.7" stroke="#ee6a9a" stroke-width="1.4" opacity="0.65"/>
<path d="M770.4 340.7C840.6 336.0 875.0 419.8 836.1 467.0" stroke="#c8204c" stroke-width="2.4" opacity="0.56"/>
<path d="M769.2 344.6C829.6 345.5 859.8 420.3 834.1 465.8" stroke="#dc3866" stroke-width="1.9" opacity="0.53"/>
<path d="M771.2 353.6C818.0 356.7 846.1 418.3 825.9 464.3" stroke="#dc3866" stroke-width="2.2" opacity="0.48"/>
<path d="M770.2 338.8C837.2 339.1 872.2 417.9 837.2 463.0" stroke="#c8204c" stroke-width="2.3" opacity="0.64"/>
<path d="M767.7 338.9C846.8 330.5 877.4 421.5 839.1 462.3" stroke="#c41e50" stroke-width="1.8" opacity="0.77"/>
<path d="M769.8 336.6C849.0 331.7 879.8 421.5 841.5 466.1" stroke="#e87aa6" stroke-width="2.0" opacity="0.69"/>
<path d="M769.3 336.6C847.1 329.0 879.3 422.5 839.3 462.5" stroke="#d02454" stroke-width="1.5" opacity="0.69"/>
<path d="M772.3 347.3C826.9 349.0 855.4 422.1 832.8 467.2" stroke="#f7a6c6" stroke-width="1.9" opacity="0.86"/>
<path d="M769.8 351.5C812.4 359.1 846.8 420.5 824.4 465.3" stroke="#b81844" stroke-width="1.5" opacity="0.86"/>
<path d="M767.0 333.7C859.1 322.5 888.9 419.5 847.0 464.1" stroke="#b01640" stroke-width="2.5" opacity="0.67"/>
<path d="M768.4 350.9C824.6 351.7 854.7 420.1 828.5 468.6" stroke="#8a0c2e" stroke-width="2.5" opacity="0.85"/>
<path d="M768.8 332.8C854.4 323.1 887.8 419.6 844.7 461.7" stroke="#dc3866" stroke-width="2.3" opacity="0.51"/>
<path d="M768.1 336.3C846.8 329.7 878.0 418.5 842.7 462.3" stroke="#e0406f" stroke-width="0.9" opacity="0.57"/>
<path d="M765.7 336.7C847.7 332.8 878.8 421.8 839.1 465.6" stroke="#d42c60" stroke-width="1.1" opacity="0.76"/>
<path d="M767.0 332.9C850.6 327.6 883.7 422.3 840.5 463.4" stroke="#e87aa6" stroke-width="1.4" opacity="0.66"/>
<path d="M767.0 337.8C845.8 330.0 878.1 422.3 841.7 464.9" stroke="#f7a6c6" stroke-width="2.4" opacity="0.77"/>
<path d="M768.1 340.7C837.1 342.9 868.5 421.1 837.0 463.4" stroke="#8a0c2e" stroke-width="1.5" opacity="0.69"/>
<path d="M769.4 346.3C827.7 347.7 856.8 421.2 830.4 468.0" stroke="#a81038" stroke-width="1.6" opacity="0.74"/>
<path d="M768.7 341.3C835.0 340.5 866.1 418.4 832.8 462.9" stroke="#c41e50" stroke-width="1.9" opacity="0.49"/>
<path d="M768.9 346.7C822.9 349.9 857.0 419.6 829.8 466.8" stroke="#b01640" stroke-width="1.1" opacity="0.76"/>
<path d="M771.2 343.0C837.3 341.3 866.3 421.4 833.9 467.5" stroke="#e87aa6" stroke-width="0.8" opacity="0.60"/>
<path d="M770.7 343.8C828.5 347.0 861.9 421.6 832.7 463.9" stroke="#b01640" stroke-width="1.8" opacity="0.58"/>
</g>
<g fill="none" stroke-linecap="round" filter="url(#b05)">
<path d="M767.6 359.0C739.2 361.1 714.0 396.8 724.5 477.3" stroke="#e05a90" stroke-width="2.1" opacity="0.75"/>
<path d="M766.0 359.0C740.0 363.6 712.2 396.1 723.5 475.5" stroke="#f7a6c6" stroke-width="1.4" opacity="0.79"/>
<path d="M767.4 359.0C737.0 363.8 710.9 395.8 725.2 474.9" stroke="#f2a0cc" stroke-width="1.0" opacity="0.83"/>
<path d="M768.1 356.3C737.9 362.7 710.1 395.7 721.4 473.6" stroke="#f2a0cc" stroke-width="1.9" opacity="0.87"/>
<path d="M756.6 337.1C723.4 351.6 700.5 404.5 717.1 472.6" stroke="#fbcfe0" stroke-width="1.5" opacity="0.56"/>
<path d="M765.6 353.1C735.6 358.9 710.1 396.0 722.7 473.4" stroke="#d06aa8" stroke-width="1.9" opacity="0.66"/>
<path d="M762.4 350.5C734.6 359.7 708.3 397.6 720.2 476.6" stroke="#fbcfe0" stroke-width="2.0" opacity="0.84"/>
<path d="M764.8 354.0C736.6 359.6 709.6 396.6 723.5 474.5" stroke="#f7a6c6" stroke-width="1.2" opacity="0.75"/>
<path d="M764.3 352.3C735.6 360.6 710.6 396.2 723.0 474.1" stroke="#fbcfe0" stroke-width="2.2" opacity="0.69"/>
<path d="M770.4 363.0C742.3 366.1 715.8 395.3 725.9 477.3" stroke="#e878b0" stroke-width="2.0" opacity="0.67"/>
<path d="M759.2 342.8C726.6 354.7 701.5 402.8 716.4 474.5" stroke="#fbcfe0" stroke-width="0.8" opacity="0.60"/>
<path d="M765.7 355.3C739.0 362.5 710.8 395.0 723.3 473.6" stroke="#f7a6c6" stroke-width="1.4" opacity="0.63"/>
<path d="M764.7 357.4C738.0 362.3 709.6 397.3 723.5 473.6" stroke="#e878b0" stroke-width="2.0" opacity="0.64"/>
<path d="M763.0 353.3C735.6 357.2 709.0 396.4 722.8 473.3" stroke="#f7a6c6" stroke-width="1.2" opacity="0.83"/>
<path d="M757.6 336.8C724.4 350.0 702.4 404.7 716.0 472.8" stroke="#e878b0" stroke-width="1.0" opacity="0.78"/>
<path d="M767.7 357.9C737.3 360.8 712.9 395.3 721.8 475.5" stroke="#e878b0" stroke-width="2.1" opacity="0.57"/>
<path d="M765.8 359.9C738.9 360.7 714.1 393.0 725.4 473.6" stroke="#e05a90" stroke-width="1.2" opacity="0.60"/>
<path d="M758.7 341.0C727.4 352.1 702.3 401.8 716.7 476.0" stroke="#f7a6c6" stroke-width="1.7" opacity="0.87"/>
<path d="M761.0 350.0C729.4 354.9 707.7 400.7 719.4 474.8" stroke="#f7a6c6" stroke-width="1.5" opacity="0.70"/>
<path d="M760.6 340.7C727.2 351.2 703.6 400.8 718.0 473.3" stroke="#fbcfe0" stroke-width="1.6" opacity="0.60"/>
<path d="M762.3 343.6C728.4 356.0 705.0 399.6 717.6 476.5" stroke="#f7a6c6" stroke-width="1.6" opacity="0.85"/>
<path d="M766.4 358.7C740.0 362.9 712.9 393.2 725.4 473.9" stroke="#f2a0cc" stroke-width="1.6" opacity="0.72"/>
<path d="M759.5 340.8C725.8 351.5 702.6 402.0 718.2 473.5" stroke="#e05a90" stroke-width="1.5" opacity="0.76"/>
<path d="M763.4 349.7C732.8 358.5 708.2 397.9 720.2 474.8" stroke="#d06aa8" stroke-width="1.1" opacity="0.89"/>
<path d="M769.5 365.8C745.0 363.9 715.1 393.5 723.7 474.9" stroke="#e05a90" stroke-width="1.0" opacity="0.66"/>
<path d="M766.1 355.4C735.6 363.2 712.3 396.5 721.9 474.4" stroke="#e05a90" stroke-width="2.0" opacity="0.67"/>
</g>
<path d="M760 350Q790 352 812 368" fill="none" stroke="#fde4ee" stroke-width="4" opacity="0.7" filter="url(#b1)"/>
<path d="M733 352Q748 344 760 346" fill="none" stroke="#fde4ee" stroke-width="5" opacity="0.7" filter="url(#b1)"/>
<path d="M759 326Q757 342 753 362" fill="none" stroke="#6a0c28" stroke-width="2" opacity="0.8" filter="url(#b05)"/>
<path d="M796 326Q800 296 830 292Q862 290 880 310Q894 330 888 352Q878 376 850 374Q820 376 804 356Q794 342 796 326Z" fill="#d85a8e"/>
<ellipse cx="823" cy="320" rx="27" ry="26" fill="url(#curlG1)"/>
<ellipse cx="862" cy="341" rx="26" ry="25" fill="url(#curlG2)"/>
<g fill="none" stroke-linecap="round" filter="url(#b05)">
<path d="M826.9 331.2A8.4 8.4 0 0 1 818.2 325.9" stroke="#ec7aa8" stroke-width="2.2" opacity="0.74"/>
<path d="M820.7 327.4A9.0 9.0 0 0 1 820.3 312.0" stroke="#fde0ee" stroke-width="3.3" opacity="0.87"/>
<path d="M814.4 326.3A12.2 12.2 0 0 1 809.4 318.1" stroke="#ec7aa8" stroke-width="2.4" opacity="0.63"/>
<path d="M824.1 301.9A18.1 18.1 0 0 1 840.3 322.4" stroke="#fde0ee" stroke-width="1.7" opacity="0.62"/>
<path d="M818.6 309.2A8.1 8.1 0 0 1 828.3 313.1" stroke="#c84a80" stroke-width="2.4" opacity="0.71"/>
<path d="M824.4 340.9A21.6 21.6 0 0 1 805.5 339.2" stroke="#ec7aa8" stroke-width="3.0" opacity="0.78"/>
<path d="M847.2 320.7A27.7 27.7 0 0 1 826.1 347.5" stroke="#a84070" stroke-width="1.8" opacity="0.85"/>
<path d="M816.4 337.4A21.0 21.0 0 0 1 805.5 305.6" stroke="#ec7aa8" stroke-width="1.3" opacity="0.59"/>
<path d="M809.3 314.3A16.6 16.6 0 0 1 818.4 301.9" stroke="#f6b0d0" stroke-width="1.6" opacity="0.54"/>
<path d="M819.4 309.9A12.2 12.2 0 0 1 833.5 318.4" stroke="#c84a80" stroke-width="2.1" opacity="0.73"/>
<path d="M828.6 309.1A10.6 10.6 0 0 1 827.2 327.5" stroke="#c84a80" stroke-width="2.8" opacity="0.48"/>
<path d="M798.3 313.1A24.1 24.1 0 0 1 824.8 297.9" stroke="#c84a80" stroke-width="1.4" opacity="0.64"/>
<path d="M835.8 325.5A14.6 14.6 0 0 1 818.6 333.9" stroke="#ec7aa8" stroke-width="3.4" opacity="0.54"/>
<path d="M809.9 339.5A24.7 24.7 0 0 1 811.5 296.9" stroke="#ec7aa8" stroke-width="2.3" opacity="0.57"/>
<path d="M816.8 340.2A26.6 26.6 0 0 1 816.2 290.0" stroke="#f6b0d0" stroke-width="1.9" opacity="0.62"/>
<path d="M817.9 340.2A22.3 22.3 0 0 1 811.2 302.3" stroke="#a84070" stroke-width="3.3" opacity="0.70"/>
<path d="M816.8 310.0A13.7 13.7 0 0 1 830.6 307.8" stroke="#a84070" stroke-width="1.3" opacity="0.77"/>
<path d="M833.3 325.9A10.6 10.6 0 0 1 826.3 330.1" stroke="#f3a0c4" stroke-width="3.2" opacity="0.85"/>
<path d="M833.2 312.2A14.4 14.4 0 0 1 834.8 322.9" stroke="#a84070" stroke-width="2.3" opacity="0.46"/>
<path d="M819.0 339.1A21.2 21.2 0 0 1 798.7 326.0" stroke="#f6b0d0" stroke-width="1.2" opacity="0.70"/>
<path d="M827.2 298.4A25.5 25.5 0 0 1 846.8 306.5" stroke="#a84070" stroke-width="1.8" opacity="0.50"/>
<path d="M824.9 311.0A7.1 7.1 0 0 1 829.2 317.1" stroke="#ec7aa8" stroke-width="1.6" opacity="0.73"/>
<path d="M806.2 314.9A17.3 17.3 0 0 1 825.9 304.1" stroke="#e05a90" stroke-width="2.8" opacity="0.61"/>
<path d="M843.6 312.5A23.0 23.0 0 0 1 824.7 347.8" stroke="#c84a80" stroke-width="1.5" opacity="0.65"/>
<path d="M802.9 324.9A21.0 21.0 0 0 1 812.9 307.0" stroke="#c84a80" stroke-width="2.2" opacity="0.78"/>
<path d="M821.8 342.0A20.1 20.1 0 0 1 804.2 314.2" stroke="#e05a90" stroke-width="3.2" opacity="0.82"/>
<path d="M807.6 330.8A19.9 19.9 0 0 1 823.4 300.5" stroke="#ec7aa8" stroke-width="1.7" opacity="0.73"/>
<path d="M815.4 310.7A13.9 13.9 0 0 1 836.7 326.7" stroke="#ec7aa8" stroke-width="1.8" opacity="0.57"/>
<path d="M818.0 307.4A11.5 11.5 0 0 1 832.8 311.1" stroke="#f3a0c4" stroke-width="3.3" opacity="0.54"/>
<path d="M808.7 319.0A15.4 15.4 0 0 1 835.6 312.1" stroke="#fde0ee" stroke-width="1.6" opacity="0.48"/>
<path d="M832.1 309.8A15.9 15.9 0 0 1 828.2 335.8" stroke="#ec7aa8" stroke-width="3.6" opacity="0.63"/>
<path d="M800.9 312.1A19.8 19.8 0 0 1 836.1 307.2" stroke="#c84a80" stroke-width="3.3" opacity="0.64"/>
<path d="M830.9 312.0A10.1 10.1 0 0 1 832.4 323.4" stroke="#a84070" stroke-width="1.7" opacity="0.67"/>
<path d="M819.5 336.6A14.1 14.1 0 0 1 809.9 331.5" stroke="#f3a0c4" stroke-width="1.2" opacity="0.60"/>
</g>
<g fill="none" stroke-linecap="round" filter="url(#b05)">
<path d="M863.6 329.7A8.8 8.8 0 0 1 864.0 346.5" stroke="#d83a70" stroke-width="2.1" opacity="0.48"/>
<path d="M851.3 329.5A18.7 18.7 0 0 1 880.3 338.4" stroke="#d8a0d0" stroke-width="2.2" opacity="0.83"/>
<path d="M869.2 357.0A19.3 19.3 0 0 1 855.0 356.0" stroke="#a84070" stroke-width="1.3" opacity="0.70"/>
<path d="M852.3 341.7A7.8 7.8 0 0 1 864.2 333.3" stroke="#c84a80" stroke-width="3.0" opacity="0.81"/>
<path d="M847.3 354.9A23.2 23.2 0 0 1 864.9 316.9" stroke="#f3a0c4" stroke-width="3.3" opacity="0.67"/>
<path d="M843.6 350.4A21.7 21.7 0 0 1 868.4 318.2" stroke="#a84070" stroke-width="2.1" opacity="0.62"/>
<path d="M870.0 322.4A18.8 18.8 0 0 1 880.8 343.9" stroke="#8a3a60" stroke-width="1.9" opacity="0.49"/>
<path d="M862.8 328.6A13.5 13.5 0 0 1 875.8 334.2" stroke="#ec7aa8" stroke-width="2.0" opacity="0.52"/>
<path d="M866.9 350.6A12.7 12.7 0 0 1 857.7 349.7" stroke="#d83a70" stroke-width="3.0" opacity="0.79"/>
<path d="M865.5 347.2A6.3 6.3 0 0 1 860.4 347.4" stroke="#fde0ee" stroke-width="3.3" opacity="0.55"/>
<path d="M856.8 328.4A15.8 15.8 0 0 1 872.7 329.5" stroke="#a84070" stroke-width="3.1" opacity="0.80"/>
<path d="M879.4 344.5A15.4 15.4 0 0 1 854.9 355.4" stroke="#e890b8" stroke-width="2.6" opacity="0.85"/>
<path d="M846.4 322.0A25.3 25.3 0 0 1 884.0 321.8" stroke="#e8b0dc" stroke-width="2.8" opacity="0.65"/>
<path d="M869.2 328.1A14.3 14.3 0 0 1 872.0 349.1" stroke="#f9c4dc" stroke-width="2.4" opacity="0.65"/>
<path d="M872.1 344.6A11.6 11.6 0 0 1 866.2 351.4" stroke="#c84a80" stroke-width="2.8" opacity="0.59"/>
<path d="M884.9 337.4A23.3 23.3 0 0 1 868.5 364.2" stroke="#fde0ee" stroke-width="1.4" opacity="0.53"/>
<path d="M865.8 314.9A23.9 23.9 0 0 1 881.6 330.7" stroke="#c84a80" stroke-width="1.3" opacity="0.84"/>
<path d="M861.6 361.5A22.2 22.2 0 0 1 842.9 326.0" stroke="#e05a90" stroke-width="2.3" opacity="0.88"/>
<path d="M872.0 350.0A10.1 10.1 0 0 1 857.8 350.8" stroke="#fde0ee" stroke-width="3.1" opacity="0.80"/>
<path d="M874.0 330.7A16.1 16.1 0 0 1 858.9 355.3" stroke="#f9c4dc" stroke-width="3.2" opacity="0.88"/>
<path d="M860.2 348.3A11.0 11.0 0 0 1 851.2 336.2" stroke="#fde0ee" stroke-width="3.2" opacity="0.48"/>
<path d="M871.2 367.2A24.8 24.8 0 0 1 840.4 340.8" stroke="#8a3a60" stroke-width="3.4" opacity="0.62"/>
<path d="M857.8 320.7A21.6 21.6 0 0 1 883.6 350.7" stroke="#e05a90" stroke-width="1.6" opacity="0.51"/>
<path d="M840.3 347.8A20.8 20.8 0 0 1 843.6 329.1" stroke="#a84070" stroke-width="1.9" opacity="0.45"/>
<path d="M866.3 349.7A7.1 7.1 0 0 1 857.5 341.1" stroke="#f3a0c4" stroke-width="2.6" opacity="0.64"/>
<path d="M843.2 355.8A22.3 22.3 0 0 1 850.1 325.0" stroke="#e8b0dc" stroke-width="2.1" opacity="0.67"/>
<path d="M870.7 344.3A8.8 8.8 0 0 1 855.4 338.3" stroke="#e05a90" stroke-width="3.3" opacity="0.62"/>
<path d="M842.6 328.1A20.5 20.5 0 0 1 871.1 324.2" stroke="#fde0ee" stroke-width="2.6" opacity="0.57"/>
<path d="M878.3 341.8A20.1 20.1 0 0 1 851.3 359.7" stroke="#c84a80" stroke-width="2.1" opacity="0.58"/>
<path d="M865.5 336.4A8.2 8.2 0 0 1 860.9 350.1" stroke="#e05a90" stroke-width="1.4" opacity="0.61"/>
</g>
<path d="M826 320c2 -4 9 -2 8 4c-1 9 -13 12 -20 4c-9 -10 -1 -25 14 -24" fill="none" stroke="#9a3c68" stroke-width="2.6" opacity="0.6" stroke-linecap="round" filter="url(#b1)"/>
<path d="M864 342c2 -4 8 -2 7 4c-1 8 -12 10 -18 3c-7 -9 0 -22 13 -21" fill="none" stroke="#7e3058" stroke-width="2.6" opacity="0.65" stroke-linecap="round" filter="url(#b1)"/>
<path d="M802 316q8 -18 28 -20" fill="none" stroke="#fbd6e8" stroke-width="4" opacity="0.7" stroke-linecap="round" filter="url(#b1)"/>
<path d="M838 366q30 4 46 -18" fill="none" stroke="#d8285a" stroke-width="5" opacity="0.7" stroke-linecap="round" filter="url(#b1)"/>
<g fill="none" stroke-linecap="round" filter="url(#b05)">
<path d="M875.1 303.3C887.6 317.4 895.7 330.9 888.3 354.8" stroke="#c86a98" stroke-width="0.7" opacity="0.60"/>
<path d="M875.7 300.2C888.1 313.0 895.6 334.4 886.3 356.1" stroke="#e890b8" stroke-width="1.4" opacity="0.43"/>
<path d="M874.0 303.7C887.9 318.6 892.0 333.8 885.7 355.1" stroke="#a84a78" stroke-width="1.2" opacity="0.40"/>
<path d="M880.8 307.5C897.9 320.6 900.5 339.4 892.1 359.3" stroke="#e890b8" stroke-width="0.6" opacity="0.74"/>
<path d="M881.8 302.8C894.4 319.8 897.8 337.1 891.5 358.4" stroke="#a84a78" stroke-width="1.1" opacity="0.43"/>
<path d="M873.4 301.5C885.7 313.0 890.4 332.9 886.7 356.8" stroke="#a84a78" stroke-width="1.0" opacity="0.62"/>
<path d="M876.7 300.4C891.6 313.6 896.5 334.7 887.3 356.3" stroke="#a84a78" stroke-width="1.4" opacity="0.57"/>
<path d="M868.0 302.0C885.5 313.4 888.0 330.3 883.2 349.7" stroke="#c86a98" stroke-width="1.3" opacity="0.62"/>
<path d="M879.3 303.9C891.9 316.4 896.3 338.6 888.6 360.5" stroke="#e890b8" stroke-width="1.1" opacity="0.75"/>
<path d="M879.9 305.7C897.8 318.9 896.4 340.9 888.3 358.8" stroke="#c86a98" stroke-width="1.2" opacity="0.55"/>
</g>
<g>
<path d="M721.0 346.0Q705.8 317.0 683.4 320.6Q676.8 329.9 675.9 341.3Q690.7 358.4 721.0 346.0Z" fill="#4a1258" stroke="#b070d0" stroke-width="0.6" stroke-opacity="0.6"/>
<path d="M721.0 346.0Q734.9 314.0 716.5 298.7Q704.2 300.0 694.0 306.9Q689.8 330.4 721.0 346.0Z" fill="#521560" stroke="#b070d0" stroke-width="0.6" stroke-opacity="0.6"/>
<path d="M721.0 346.0Q752.2 336.0 752.5 313.4Q744.5 305.3 733.5 302.4Q714.0 314.0 721.0 346.0Z" fill="#5c1a6c" stroke="#b070d0" stroke-width="0.6" stroke-opacity="0.6"/>
<path d="M721.0 346.0Q689.0 336.8 678.6 356.6Q682.0 368.5 690.6 377.4Q713.0 378.3 721.0 346.0Z" fill="#4c135a" stroke="#b070d0" stroke-width="0.6" stroke-opacity="0.6"/>
<path d="M721.0 346.0Q693.0 366.7 701.2 389.2Q712.5 394.3 724.8 393.4Q740.2 375.1 721.0 346.0Z" fill="#561764" stroke="#b070d0" stroke-width="0.6" stroke-opacity="0.6"/>
<path d="M721.0 346.0Q719.0 377.8 739.6 385.2Q749.9 380.5 756.4 371.1Q752.7 349.6 721.0 346.0Z" fill="#662078" stroke="#b070d0" stroke-width="0.6" stroke-opacity="0.6"/>
<path d="M721.0 346.0Q741.9 366.0 759.0 356.0Q762.0 346.0 759.0 336.0Q741.9 326.0 721.0 346.0Z" fill="#6c247e" stroke="#b070d0" stroke-width="0.6" stroke-opacity="0.6"/>
<path d="M721.0 346.0Q747.8 355.4 761.7 340.8Q761.4 331.3 755.5 323.9Q735.5 321.6 721.0 346.0Z" fill="#782a88" stroke="#b070d0" stroke-width="0.6" stroke-opacity="0.6"/>
<path d="M722.0 346.0Q722.3 320.8 705.7 317.0Q697.3 321.3 693.0 329.7Q696.8 346.3 722.0 346.0Z" fill="#6a2080" stroke="#c890e0" stroke-width="0.6" stroke-opacity="0.6"/>
<path d="M722.0 346.0Q743.9 333.7 739.0 317.4Q731.1 312.2 721.6 312.8Q709.2 324.3 722.0 346.0Z" fill="#76288a" stroke="#c890e0" stroke-width="0.6" stroke-opacity="0.6"/>
<path d="M722.0 346.0Q702.6 331.1 690.9 342.3Q689.5 351.7 694.0 360.1Q708.9 366.6 722.0 346.0Z" fill="#621c76" stroke="#c890e0" stroke-width="0.6" stroke-opacity="0.6"/>
<path d="M722.0 346.0Q699.1 356.4 702.6 373.0Q710.0 378.9 719.5 379.1Q732.9 368.7 722.0 346.0Z" fill="#722686" stroke="#c890e0" stroke-width="0.6" stroke-opacity="0.6"/>
<path d="M722.0 346.0Q724.4 368.9 739.8 371.4Q747.3 367.2 750.1 359.2Q744.9 344.3 722.0 346.0Z" fill="#863094" stroke="#c890e0" stroke-width="0.6" stroke-opacity="0.6"/>
<path d="M722.0 346.0Q742.6 354.5 752.8 342.8Q753.0 334.7 747.6 328.7Q732.4 326.3 722.0 346.0Z" fill="#90389c" stroke="#c890e0" stroke-width="0.6" stroke-opacity="0.6"/>
<ellipse cx="723" cy="345" rx="10" ry="12" transform="rotate(35 723 345)" fill="#b27840"/>
<ellipse cx="723" cy="345" rx="6.5" ry="8.5" transform="rotate(35 723 345)" fill="none" stroke="#7a4a28" stroke-width="5" stroke-dasharray="0.8 1.4" opacity="0.6"/>
<path d="M714 352Q720 362 734 354Q728 366 716 360Z" fill="#5a1a78" opacity="0.8"/>
</g>
<g>
<path d="M752 288l4 12l-6 2z" fill="#c02840"/>
<circle cx="777.5" cy="306" r="17.5" fill="#874664"/>
<path d="M762 302q6 -14 20 -12q12 4 10 14q-10 -8 -30 -2z" fill="#9a6e8e"/>
<path d="M764 311q10 -10 28 -4q-2 14 -14 16q-10 -2 -14 -12z" fill="#d06a88"/>
<path d="M770 300q8 -5 16 2q-7 6 -16 -2z" fill="#b85476"/>
<path d="M764 296q6 14 14 26M762 304q-2 10 8 16M790 298q6 8 2 18" fill="none" stroke="#c8b0c0" stroke-width="0.8"/>
</g>
<path d="M716 498Q720 486 734 486Q744 490 742 500Q736 508 722 506Z" fill="#8684a4"/>
<path d="M794 514Q806 508 815 516Q818 526 812 532Q800 534 793 526Z" fill="#8684a4"/>
<path d="M718 497q8 -8 20 -4M796 518q8 -6 18 0" fill="none" stroke="#b4b4cc" stroke-width="1" stroke-dasharray="1 1"/>
<path d="M746 502Q742 520 752 536Q760 548 775 550L794 547Q796 530 800 512L790 490L760 486Z" fill="url(#catG)"/>
<path d="M730 502Q750 515 770 524L776 534Q760 536 745 526Q732 516 726 508Z" fill="#e2d2e6"/>
<path d="M806 524Q790 526 778 524L770 532Q790 538 808 532Z" fill="#decee2"/>
<path d="M760 538h34v10q-16 5 -30 0z" fill="#b4a6cc"/>
<path d="M764 548v-6M770 549v-6M776 549v-6M782 549v-6M788 548v-6" stroke="#8878a8" stroke-width="0.7" fill="none"/>
<path d="M758.6 486Q757.6 472 761.6 462.6Q770 468 777.4 478Z" fill="#dccfe6"/><path d="M788.6 477Q794 468 801.4 463.6Q805.6 472 805.4 487Z" fill="#dccfe6"/>
<path d="M761.4 482Q761 473 763.2 467Q768.4 471.4 773 478.4Z" fill="#d8a6c6"/><path d="M792.6 477.6Q796.4 471.4 800.6 468.2Q802.8 474 802.8 482.6Z" fill="#d8a6c6"/>
<path d="M763 484Q770 474 783 474Q797 474 803 484Q806 494 800 503Q794 511 786 512Q774 511 767 503Q760 494 763 484Z" fill="#d2c6e2"/>
<path d="M766 486Q774 478 783 478Q794 478 800 486" fill="none" stroke="#b0a2c8" stroke-width="1.6" opacity="0.7" filter="url(#b05)"/>
<ellipse cx="788" cy="501" rx="9" ry="6.4" fill="#e0d6ec"/>
<path d="M764 490Q772 482 782 486M786 486Q796 482 802 490" fill="none" stroke="#9c8cb8" stroke-width="1.2" opacity="0.8"/>
<ellipse cx="778.4" cy="493.6" rx="2.6" ry="1.9" fill="#7cc6e6"/><ellipse cx="794.4" cy="493.6" rx="2.4" ry="1.8" fill="#7cc6e6"/>
<circle cx="778.6" cy="493.6" r="0.8" fill="#223"/><circle cx="794.6" cy="493.6" r="0.8" fill="#223"/>
<path d="M790.5 501.5l2.6 0l-1.3 2.2z" fill="#c04860"/>
<path d="M775 508q6 4 12 3" fill="none" stroke="#8c7cac" stroke-width="0.7"/>
</g>
<path d="M631.5 653.2V326A151.5 107 0 0 1 934.5 326V653.2Z" fill="none" stroke="#d9a900" stroke-width="1.1"/>
<g filter="url(#fArc)"><text font-family="'Liberation Serif',serif" font-weight="bold" fill="#ffcc00" xml:space="preserve"><textPath href="#arcp" startOffset="5" textLength="421" lengthAdjust="spacingAndGlyphs"><tspan font-size="34">PART </tspan><tspan font-size="40">OF </tspan><tspan font-size="47">THE </tspan><tspan font-size="46">CYCLE </tspan><tspan font-size="38">OF </tspan><tspan font-size="31">LIFE</tspan></textPath></text></g>
<g fill="none" stroke="#dba200" stroke-width="1.2"><rect x="608.3" y="353.1" width="14.5" height="10.9" rx="3" fill="#fff8dc"/><path d="M609.9 360.4h11.3" stroke-width="2.2" stroke-dasharray="1.3 1.1"/><ellipse cx="615.5" cy="346.6" rx="10.7" ry="8.6" fill="#fff8dc"/><ellipse cx="615.5" cy="346.6" rx="8.9" ry="6.6" stroke-width="1.6" stroke-dasharray="1.6 1" opacity="0.85"/><path d="M612.1 342.7q3.4 -4 6.8 0" stroke-width="1.2"/><circle cx="610.5" cy="348.7" r="2.6" fill="#ffcc00" stroke="none"/><circle cx="620.5" cy="348.7" r="2.6" fill="#ffcc00" stroke="none"/><circle cx="610.5" cy="348.7" r="3.3" stroke-width="0.9" stroke-dasharray="1 0.8"/><circle cx="620.5" cy="348.7" r="3.3" stroke-width="0.9" stroke-dasharray="1 0.8"/><path d="M615.5 350.2l1.7 4.2h-3.4z" fill="#ffcc00" stroke="none"/></g>
<g fill="none" stroke="#dba200" stroke-width="1.2"><rect x="946.8" y="353.1" width="14.5" height="10.9" rx="3" fill="#fff8dc"/><path d="M948.4 360.4h11.3" stroke-width="2.2" stroke-dasharray="1.3 1.1"/><ellipse cx="954.0" cy="346.6" rx="10.7" ry="8.6" fill="#fff8dc"/><ellipse cx="954.0" cy="346.6" rx="8.9" ry="6.6" stroke-width="1.6" stroke-dasharray="1.6 1" opacity="0.85"/><path d="M950.6 342.7q3.4 -4 6.8 0" stroke-width="1.2"/><circle cx="949.0" cy="348.7" r="2.6" fill="#ffcc00" stroke="none"/><circle cx="959.0" cy="348.7" r="2.6" fill="#ffcc00" stroke="none"/><circle cx="949.0" cy="348.7" r="3.3" stroke-width="0.9" stroke-dasharray="1 0.8"/><circle cx="959.0" cy="348.7" r="3.3" stroke-width="0.9" stroke-dasharray="1 0.8"/><path d="M954.0 350.2l1.7 4.2h-3.4z" fill="#ffcc00" stroke="none"/></g>
<g fill="none" stroke="#dba200" stroke-width="1.2"><rect x="775.8" y="841.0" width="13.4" height="9.2" rx="3" fill="#fff8dc"/><path d="M777.2 847.1h10.5" stroke-width="2.2" stroke-dasharray="1.3 1.1"/><ellipse cx="782.5" cy="835.5" rx="9.9" ry="7.3" fill="#fff8dc"/><ellipse cx="782.5" cy="835.5" rx="8.1" ry="5.3" stroke-width="1.6" stroke-dasharray="1.6 1" opacity="0.85"/><path d="M779.1 832.2q3.4 -4 6.8 0" stroke-width="1.2"/><circle cx="777.9" cy="837.3" r="2.6" fill="#ffcc00" stroke="none"/><circle cx="787.1" cy="837.3" r="2.6" fill="#ffcc00" stroke="none"/><circle cx="777.9" cy="837.3" r="3.3" stroke-width="0.9" stroke-dasharray="1 0.8"/><circle cx="787.1" cy="837.3" r="3.3" stroke-width="0.9" stroke-dasharray="1 0.8"/><path d="M782.5 838.5l1.7 4.2h-3.4z" fill="#ffcc00" stroke="none"/><path d="M781.8 823.4l9 1.9l-1.5 6.6l-8.6 -1.6z" fill="#ffcc00" stroke="#dba200" stroke-width="0.6"/><path d="M780.7 828.9q4 2.6 8.2 1.4" stroke="#5c1a64" stroke-width="1.5"/></g>
<g filter="url(#fSmall)"><text transform="scale(0.4550 0.6550)" x="1394.1 1449.1 1498.3 1547.5 1621.9 1697.7 1775.4 1844.9 1898.4 1970.5" y="1077.0 1077.3 1077.3 1082.1 1077.3 1079.6 1078.1 1078.9 1084.1 1077.3" font-family="'Liberation Serif',serif" font-weight="bold" font-size="100" fill="#ffcc00">LA CATRINA</text></g>
<g filter="url(#fQuote)" font-family="'Liberation Sans',sans-serif" font-weight="bold" fill="#ffcc00" font-size="21">
<text x="609.0" y="752.8" textLength="347.5" lengthAdjust="spacingAndGlyphs">DEATH, A NECESSARY END</text>
<text x="573.5" y="775.0" textLength="427.0" lengthAdjust="spacingAndGlyphs">WILL COME WHEN IT WILL COME</text>
<text x="578.5" y="797.0" textLength="409.0" lengthAdjust="spacingAndGlyphs">WE CAN ONLY LIVE OUR LIVES</text>
<text x="587.5" y="819.0" textLength="400.0" lengthAdjust="spacingAndGlyphs">TO THE FULLEST UNTIL THEN</text>
</g>
<g filter="url(#fOnyx)"><text transform="scale(1.0200 1.2000)" x="1130.7 1210.7 1286.9 1358.5" y="511.8 520.7 516.3 514.8" rotate="0 3 2 2" font-family="'Liberation Serif',serif" font-weight="bold" font-size="100" fill="#6a1d58">ONYX</text></g>
</g>
</svg>
<svg width="92" height="1018" viewBox="0 0 92 1018" style="left:0;top:0">
<g fill="#c6c6c6" stroke="none">
<path d="M20.8 127.6V146.6L27.3 141L34.6 140.4Z" fill="none" stroke="#c6c6c6" stroke-width="1.5" stroke-linejoin="miter"/>
<path d="M57.2 126V148.2L64.9 141.4L73.4 140.8Z"/>
<path d="M80.2 148.8h-4.9l4.9 -4.7z"/>
<path d="M18.2 175.6L30.6 164.4" stroke="#c6c6c6" stroke-width="2.6" stroke-linecap="round" fill="none"/>
<path d="M23.20 156.80L24.38 159.82L27.40 161.00L24.38 162.18L23.20 165.20L22.02 162.18L19.00 161.00L22.02 159.82Z"/>
<path d="M33.60 155.60L34.61 158.19L37.20 159.20L34.61 160.21L33.60 162.80L32.59 160.21L30.00 159.20L32.59 158.19Z"/>
<path d="M34.80 164.40L35.47 166.13L37.20 166.80L35.47 167.47L34.80 169.20L34.13 167.47L32.40 166.80L34.13 166.13Z"/>
<path d="M62.2 171.2C55.6 169.6 52 165.4 54.6 161.6C57.4 157.2 69.4 156 72.6 160.6C73.8 162.4 73.6 164.6 72.6 166" fill="none" stroke="#c6c6c6" stroke-width="1.3"/>
<path d="M60.6 166.2a2.3 2.3 0 1 0 -0.1 4.4c1.8 1.4 0.6 4.6 -2.8 5.8" fill="none" stroke="#c6c6c6" stroke-width="1.2"/>
<path d="M63.9 160.4V178L69.8 173.2L76.8 172.6Z"/>
<path d="M16.6 207.2L20.6 194.6L27.4 189.6L33.8 196L29.6 202.6Z"/>
<path d="M28.2 188.8L30.4 186.2Q31.1 185.6 31.8 186.2L37.0 192.2Q37.5 192.9 37.0 193.6L34.6 196.4Z"/>
<path d="M17.8 206.2L24.6 199.4" stroke="#535353" stroke-width="1.1" fill="none"/>
<circle cx="25.2" cy="198.8" r="1.3" fill="#535353"/>
<path d="M42.5 208.6h-4.9l4.9 -4.7z"/>
<path d="M55.8 207.2L59.8 194.6L66.6 189.6L73.0 196L68.8 202.6Z"/>
<path d="M67.4 188.8L69.6 186.2Q70.3 185.6 71.0 186.2L76.2 192.2Q76.7 192.9 76.2 193.6L73.8 196.4Z"/>
<path d="M57.0 206.2L63.8 199.4" stroke="#535353" stroke-width="1.1" fill="none"/>
<circle cx="64.4" cy="198.8" r="1.3" fill="#535353"/>
<path d="M52.4 188.4C57.4 191.6 55.4 196.2 52.8 199.6C50.4 203 51.6 206.4 56 206.6" fill="none" stroke="#c6c6c6" stroke-width="1.3"/>
<path d="M18 217.6H35.8V222.8H33.6V220H28.4V233H30.9V235.7H22.9V233H25.4V220H20.2V222.8H18Z"/>
<path d="M42.5 238.6h-4.9l4.9 -4.7z"/>
<path d="M55 235L72.8 217.4" stroke="#c6c6c6" stroke-width="1.8" fill="none"/>
<path d="M80.2 238.6h-4.9l4.9 -4.7z"/>
<rect x="17.6" y="248.1" width="18.9" height="17" fill="#6e6e6e" stroke="#c6c6c6" stroke-width="1.5"/>
<path d="M42.5 268.6h-4.9l4.9 -4.7z"/>
<path d="M73.4 246L74.4 247.2Q74.8 249 73.6 251L66 260.6L62.6 258L70.6 248Q72 246.2 73.4 246Z"/>
<path d="M61.6 259.2L64.8 261.8Q65.4 265.2 62 266.6Q58 267.8 53.8 266.2Q57.6 264.4 58.2 261.6Q59.2 258.6 61.6 259.2Z"/>
<path d="M80.2 268.6h-4.9l4.9 -4.7z"/>
<path d="M21.8 293.2A8 8 0 1 1 29.6 283.4" fill="#6e6e6e" stroke="#c6c6c6" stroke-width="1.4"/>
<circle cx="22.2" cy="285.6" r="6.6" fill="#6e6e6e"/>
<path d="M37.6 279.2Q39.6 278.4 40.6 280Q41.2 281.6 40 282.8L28.4 295.4L22.8 296.8L23.2 291.8Z"/>
<path d="M42.5 298.6h-4.9l4.9 -4.7z"/>
<path d="M65.6 275.4L75 284.8L66.8 293H63.2L57.6 286.6Z"/>
<path d="M56.2 287.4L62.2 293.6L59.6 296Q58.6 296.6 57.6 295.8L54.2 292.2Q53.6 291.2 54.4 290.2Z" fill="#535353" stroke="#c6c6c6" stroke-width="1.2"/>
<path d="M80.2 298.6h-4.9l4.9 -4.7z"/>
<path d="M23.6 311.2A9.4 9.4 0 0 1 36.2 319.4" fill="none" stroke="#c6c6c6" stroke-width="1.7"/>
<path d="M17 308.2L24.6 308.4L22.6 315.6Z"/>
<path d="M35.8 321.4A9.4 9.4 0 0 1 17.8 320.2" fill="none" stroke="#c6c6c6" stroke-width="1.5" stroke-dasharray="1.1 2.2"/>
<path d="M42.5 328.6h-4.9l4.9 -4.7z"/>
<rect x="58.3" y="306.9" width="16.4" height="14.2" fill="none" stroke="#c6c6c6" stroke-width="1.4"/>
<rect x="53.2" y="316.2" width="11.4" height="10" fill="#6e6e6e" fill-opacity="0.55" stroke="#c6c6c6" stroke-width="1.4"/>
<path d="M67 315L72.4 309.6M68.6 309.4H72.6V313.4" fill="none" stroke="#c6c6c6" stroke-width="1.3"/>
<path d="M80.2 328.6h-4.9l4.9 -4.7z"/>
<path d="M18.2 341.4Q20.6 337.6 23.4 338.4Q25.6 340.4 24.2 344.6Q23.4 348.8 27.2 348.4Q31.2 346.6 33.8 343.6Q37.6 342 39 346Q39.4 349.4 38.4 350.6Q36.8 346.8 34.6 348.4Q30.6 353.6 25.2 353.2Q19.6 352.4 20.4 346.4Q21 342.4 18.2 341.4Z"/>
<path d="M17.4 353.6L30 340.8" stroke="#c6c6c6" stroke-width="1.2" fill="none"/>
<circle cx="17.2" cy="353.8" r="1.7" fill="#535353" stroke="#c6c6c6" stroke-width="1.1"/><circle cx="30.2" cy="340.6" r="1.7" fill="#535353" stroke="#c6c6c6" stroke-width="1.1"/><circle cx="23.6" cy="347.4" r="2.1" fill="#535353" stroke="#c6c6c6" stroke-width="1.1"/>
<path d="M42.5 358.6h-4.9l4.9 -4.7z"/>
<rect x="60.2" y="339" width="15.2" height="15.2" fill="#535353" stroke="#c6c6c6" stroke-width="1.3"/>
<circle cx="60.2" cy="339.0" r="1.35"/>
<circle cx="67.8" cy="339.0" r="1.35"/>
<circle cx="75.4" cy="339.0" r="1.35"/>
<circle cx="75.4" cy="346.6" r="1.35"/>
<circle cx="75.4" cy="354.2" r="1.35"/>
<circle cx="67.8" cy="354.2" r="1.35"/>
<circle cx="60.2" cy="354.2" r="1.35"/>
<path d="M52.2 335.2V353.4L58.4 348L65 347.2Z" stroke="#535353" stroke-width="0.8"/>
<path d="M80.2 358.6h-4.9l4.9 -4.7z"/>
<circle cx="21.4" cy="374.6" r="5.8" fill="none" stroke="#c6c6c6" stroke-width="1.3"/>
<circle cx="27.6" cy="374.6" r="8.2" fill="none" stroke="#c6c6c6" stroke-width="1.3"/>
<path d="M18 374.6H29" stroke="#c6c6c6" stroke-width="1.1" stroke-dasharray="1.6 1.2" fill="none"/>
<path d="M30.8 373V387.4L35.4 383.4L40.8 382.8Z" stroke="#535353" stroke-width="0.8"/>
<path d="M42.5 388.6h-4.9l4.9 -4.7z"/>
<path d="M52.8 366.6L65.8 370.8V376.8L52.8 386.6ZM52.8 376.4L65.8 373.8M57.4 368V383.2M61.8 369.4V379.8" fill="none" stroke="#c6c6c6" stroke-width="1.3"/>
<path d="M64 377.6H69.6M62 380.4H71.6M58.6 383.2H73.6M54 386.2H76" stroke="#8d8d8d" stroke-width="1.4" fill="none"/>
<path d="M80.2 388.6h-4.9l4.9 -4.7z"/>
<rect x="17.6" y="397.9" width="18.9" height="17" fill="none" stroke="#c6c6c6" stroke-width="1.4"/>
<path d="M17.6 405.4Q24 400.6 28.6 405Q32.6 408.6 36.4 407.6M17.6 413.4Q23.6 407 29 411.4Q32 414 34.6 414.8M24.6 398Q27.2 404 22.4 414.8M30.6 398Q34.4 406 30.6 414.8" fill="none" stroke="#c6c6c6" stroke-width="1.1"/>
<defs><linearGradient id="tg1" x1="0" x2="1" y1="0" y2="0"><stop offset="0" stop-color="#3c3c3c"/><stop offset="1" stop-color="#b8b8b8"/></linearGradient><linearGradient id="tg2" x1="0" x2="1" y1="0" y2="0"><stop offset="0" stop-color="#fff"/><stop offset="1" stop-color="#000"/></linearGradient></defs>
<rect x="54.7" y="397.9" width="18.9" height="17" fill="url(#tg1)" stroke="#c6c6c6" stroke-width="1.5"/>
<path d="M22.4 441L32.2 431.6" stroke="#c6c6c6" stroke-width="2.6" fill="none"/>
<path d="M19.8 443.2L20.6 437.4L25.8 442.8ZM34.6 429.4L33.8 435.2L28.6 429.8Z"/>
<path d="M16.8 440.4L23.4 446.6M30.8 426.4L37.4 432.8" stroke="#c6c6c6" stroke-width="1.3" fill="none"/>
<path d="M21.6 433.6L24.6 430.8" stroke="#c6c6c6" stroke-width="2.4" stroke-linecap="round" fill="none"/>
<path d="M66.4 432.6L56 443.2Q54 445.4 55.2 446.2Q56.4 447 58.4 445.2L69 434.8" fill="none" stroke="#c6c6c6" stroke-width="1.4"/>
<path d="M64 430.4L66 428.4L67.6 429.6Q69.4 426 72 426.2Q74.2 427 73.6 429.4Q73 431.4 70.6 432.6L71.6 434.4L69.6 436.4Z"/>
<path d="M80.2 448.6h-4.9l4.9 -4.7z"/>
<rect x="15.2" y="457.6" width="10.8" height="9.8"/>
<circle cx="26.8" cy="465.8" r="5.2" fill="#8d8d8d" stroke="#c6c6c6" stroke-width="1.2"/>
<circle cx="33.2" cy="470.4" r="4.7" fill="#535353" stroke="#c6c6c6" stroke-width="1.4"/>
<rect x="63.4" y="462" width="11.4" height="14.2" rx="1" fill="none" stroke="#c6c6c6" stroke-width="1.4"/>
<path d="M65.6 459.6Q65.8 456.6 69.6 456.6Q71.8 456.8 71.8 459.6V461.6H67.6V459.8Z"/>
<circle cx="69" cy="469.2" r="2.9" fill="none" stroke="#c6c6c6" stroke-width="1.7"/>
<path d="M52.4 459.0h2.4M53.6 457.8v2.4" stroke="#c6c6c6" stroke-width="0.9" fill="none"/>
<path d="M56.2 459.0h2.4M57.4 457.8v2.4" stroke="#c6c6c6" stroke-width="0.9" fill="none"/>
<path d="M60.0 459.0h2.4M61.2 457.8v2.4" stroke="#c6c6c6" stroke-width="0.9" fill="none"/>
<path d="M52.4 462.8h2.4M53.6 461.6v2.4" stroke="#c6c6c6" stroke-width="0.9" fill="none"/>
<path d="M56.2 462.8h2.4M57.4 461.6v2.4" stroke="#c6c6c6" stroke-width="0.9" fill="none"/>
<path d="M52.4 466.6h2.4M53.6 465.4v2.4" stroke="#c6c6c6" stroke-width="0.9" fill="none"/>
<path d="M80.2 478.6h-4.9l4.9 -4.7z"/>
<path d="M16.2 486.2V505.2H38.2" fill="none" stroke="#c6c6c6" stroke-width="1.5"/>
<rect x="20.3" y="495" width="4.2" height="9.6"/><rect x="27" y="487.2" width="4" height="17.4"/><rect x="33.2" y="490" width="4" height="14.6"/>
<path d="M42.5 508.6h-4.9l4.9 -4.7z"/>
<path d="M58.2 492.2H68.2L72.4 496.4V504.8H58.2Z" fill="#6e6e6e" stroke="#c6c6c6" stroke-width="1.4"/>
<path d="M68 492.2V496.6H72.4Z"/>
<path d="M58 485V490.2M51.2 492H56.4" stroke="#c6c6c6" stroke-width="1.5" fill="none"/>
<path d="M16 536.6L24.4 523.6L30 520.4L33.4 523.8L30 530.2Z" fill="none" stroke="#c6c6c6" stroke-width="1.3" stroke-linejoin="round"/>
<path d="M27.6 520.4L31.4 515.8L37.8 521L34.2 526Z"/>
<path d="M42.5 538.6h-4.9l4.9 -4.7z"/>
<path d="M60.4 536.4Q58 533.4 55.8 530.4L54 527Q53.6 525.4 55 525.2Q56.6 525.2 57.6 526.4L60 528.6L58.4 520.4Q58.2 518.6 59.6 518.4Q60.8 518.4 61.2 519.8L62.8 524.6L62.6 517.6Q62.8 516 64 516Q65.4 516 65.6 517.6L66 524.4L67.4 518.6Q67.8 517.2 69 517.4Q70.2 517.8 70 519.4L69.4 525.6L71.4 521.8Q72.2 520.6 73.2 521.2Q74 521.8 73.6 523.2L71.4 529.4Q70.8 533.6 69 536.6Q65 538.6 60.4 536.4Z"/>
<path d="M80.2 538.6h-4.9l4.9 -4.7z"/>
<path d="M17.2 545.4Q21.6 556 17.2 567.4" fill="none" stroke="#c6c6c6" stroke-width="1.4"/>
<path d="M21.2 548.4L31.6 547.4L32.2 553.8L21.8 554.8ZM21.2 558L36.8 559.4L36.4 565.8L20.8 564.2Z"/>
<circle cx="61.4" cy="553.8" r="7" fill="none" stroke="#c6c6c6" stroke-width="1.5"/>
<path d="M66.6 559L73 565.6" stroke="#c6c6c6" stroke-width="2.4" stroke-linecap="round" fill="none"/>
</g>
<rect x="7.4" y="574" width="75.2" height="1" fill="#5f5f5f"/>
<rect x="30.4" y="603.4" width="44.2" height="44.2" fill="#333"/>
<rect x="31.4" y="604.4" width="42.2" height="42.2" fill="#fff"/>
<rect x="32.4" y="605.4" width="40.2" height="40.2" fill="#6a1d58"/>
<rect x="41.4" y="614.4" width="22.2" height="22.2" fill="#333"/>
<rect x="42" y="615" width="21" height="21" fill="#fff"/>
<rect x="43.2" y="616.2" width="18.6" height="18.6" fill="#535353"/>
<rect x="43.2" y="616.2" width="18.6" height="1" fill="#3a3a3a"/><rect x="43.2" y="616.2" width="1" height="18.6" fill="#3a3a3a"/>
<rect x="8" y="580" width="44.8" height="44.6" fill="#333"/>
<rect x="9" y="581" width="42.8" height="42.6" fill="#fff"/>
<rect x="10" y="582" width="40.8" height="40.6" fill="#ffcc00"/>
<path d="M67.4 586.4Q73.6 586 73.8 593" fill="none" stroke="#c6c6c6" stroke-width="2.6"/>
<path d="M63.2 586.2L68.6 581.4V591Z" fill="#c6c6c6"/><path d="M69.4 592.6H78.2L73.8 597.4Z" fill="#c6c6c6"/>
<rect x="12.8" y="636.6" width="10.6" height="10.6" rx="1.5" fill="#000" stroke="#d0d0d0" stroke-width="1.2"/>
<rect x="15.4" y="639.2" width="5.4" height="5.4" fill="none" stroke="#888" stroke-width="1"/>
<rect x="8.8" y="632.6" width="10.6" height="10.6" rx="1.5" fill="#000" stroke="#d0d0d0" stroke-width="1.2"/>
<rect x="10.8" y="634.6" width="6.4" height="6.4" fill="#fff"/>
<rect x="8.3" y="655.6" width="72.6" height="25.6" rx="2.5" fill="#585858" stroke="#5f5f5f" stroke-width="1"/>
<rect x="8.8" y="656.2" width="22.2" height="24.6" rx="2" fill="#3b3b3b"/>
<rect x="31" y="656.2" width="1" height="24.6" fill="#515151"/><rect x="56" y="656.2" width="1" height="24.6" fill="#515151"/>
<rect x="10.9" y="660" width="17.1" height="16.9" fill="#000"/><rect x="12.9" y="662" width="13.1" height="12.9" fill="#ffcc00"/>
<rect x="36" y="660" width="17" height="16.9" fill="#000"/><rect x="38" y="662" width="13" height="12.9" fill="url(#tg2)"/>
<rect x="60.9" y="660" width="17" height="16.9" fill="#000"/><rect x="62.9" y="662" width="13" height="12.9" fill="#fff"/>
<path d="M62.9 674.9V672.3L73.4 662H76V664.4L65.4 674.9Z" fill="#f00"/>
<rect x="8.3" y="686.4" width="72.6" height="23" rx="2.5" fill="#585858" stroke="#5f5f5f" stroke-width="1"/>
<rect x="8.8" y="687" width="22.2" height="21.8" rx="2" fill="#363636"/>
<rect x="31" y="687" width="1" height="21.8" fill="#515151"/><rect x="56" y="687" width="1" height="21.8" fill="#515151"/>
<circle cx="18.8" cy="697.6" r="4.9" fill="#7a7a7a" stroke="#c6c6c6" stroke-width="1.1"/>
<rect x="19.4" y="698.2" width="7.6" height="7.6" rx="0.8" fill="#c6c6c6"/>
<circle cx="43.8" cy="697.6" r="4.9" fill="#7a7a7a" stroke="#c6c6c6" stroke-width="1.1"/>
<rect x="44.4" y="698.2" width="7.6" height="7.6" rx="0.8" fill="#c6c6c6"/>
<circle cx="68.8" cy="697.8" r="4.9" fill="none" stroke="#6c6c6c" stroke-width="1.1"/>
<path d="M68.8 697.8h4.6a4.6 4.6 0 0 1 -4.6 4.6z" fill="#6c6c6c"/>
<rect x="31.6" y="725.4" width="16.6" height="14.2" fill="#727272" stroke="#c6c6c6" stroke-width="1.3"/><rect x="31.6" y="725.4" width="16.6" height="3.6" fill="#c6c6c6"/>
<rect x="41.8" y="720.6" width="16.6" height="14.2" fill="#727272" stroke="#c6c6c6" stroke-width="1.3"/><rect x="41.8" y="720.6" width="16.6" height="3.6" fill="#c6c6c6"/>
<circle cx="38.4" cy="770.3" r="2.4" fill="#c6c6c6"/>
<circle cx="44.9" cy="770.3" r="2.4" fill="#c6c6c6"/>
<circle cx="51.4" cy="770.3" r="2.4" fill="#c6c6c6"/>
</svg>
</body>
</html>
